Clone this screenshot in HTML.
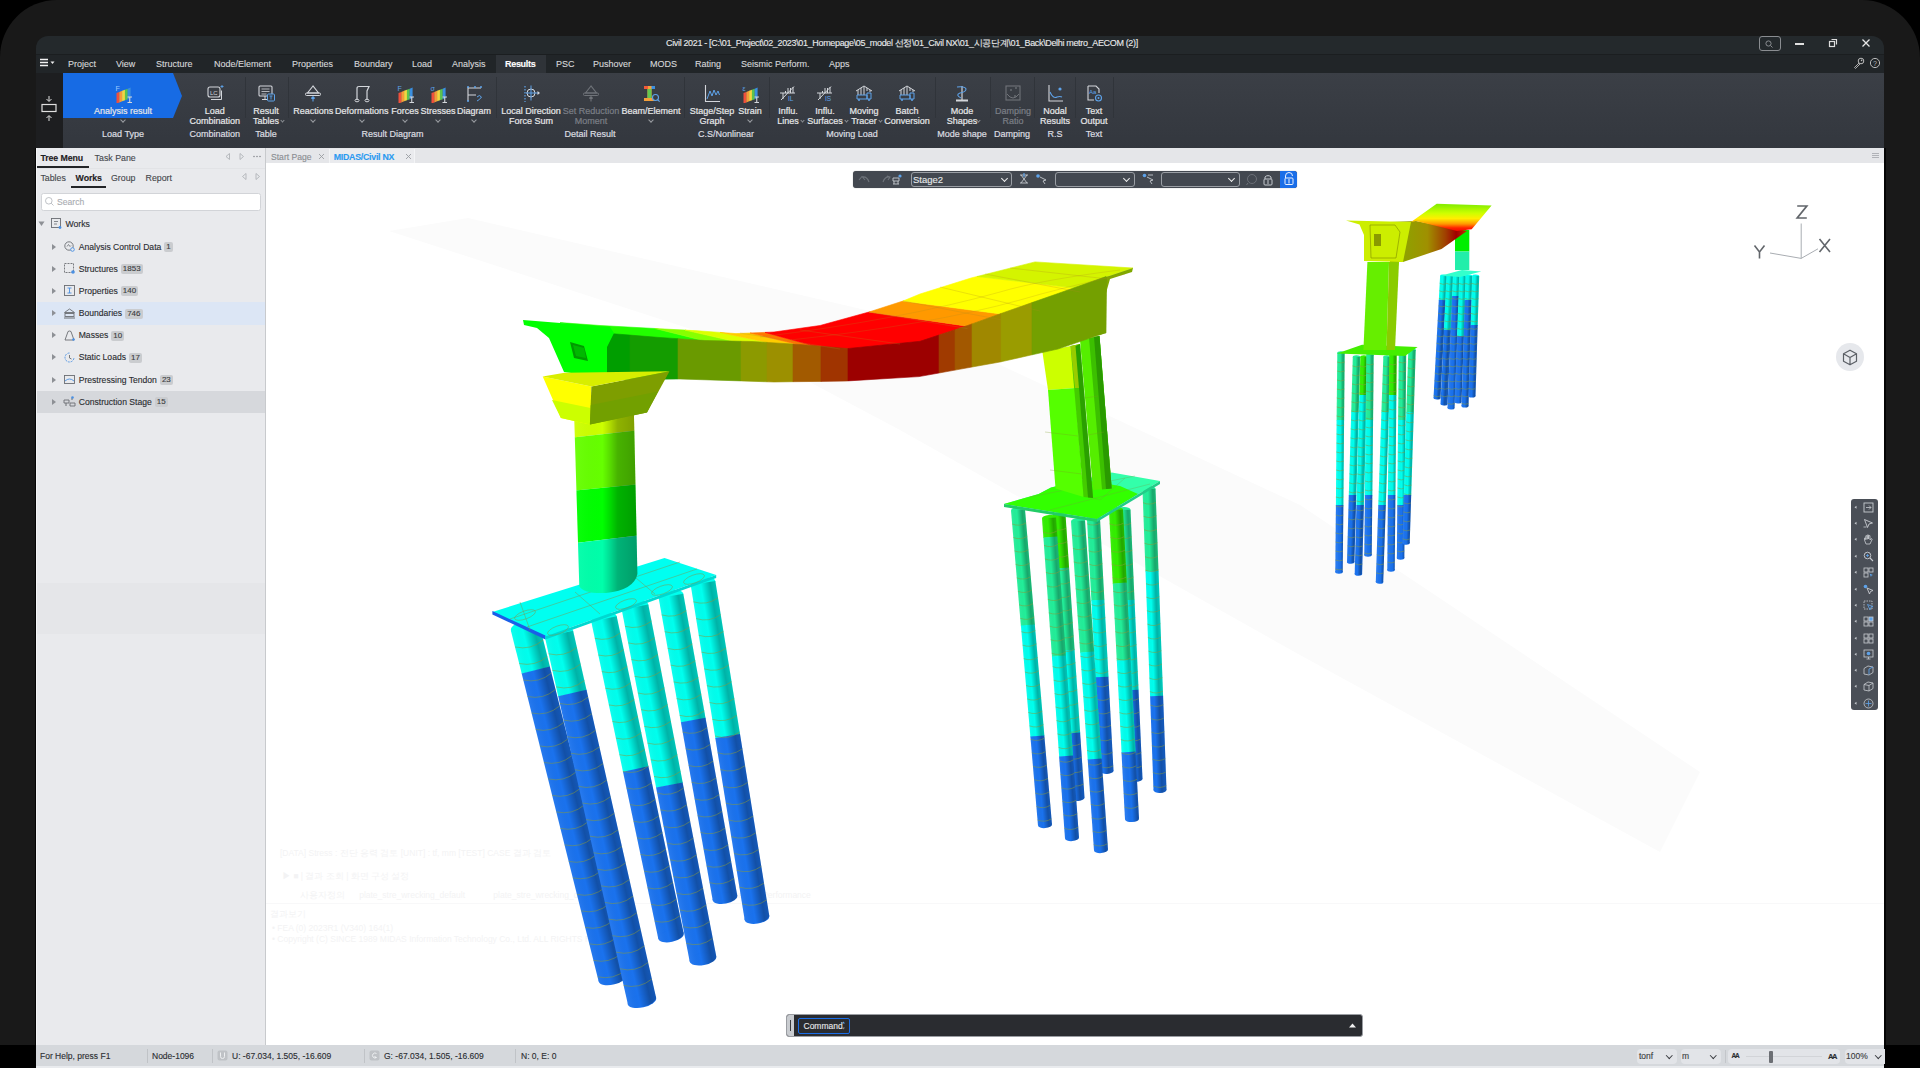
<!DOCTYPE html><html><head><meta charset="utf-8"><style>
*{margin:0;padding:0;box-sizing:border-box}
html,body{width:1920px;height:1068px;overflow:hidden;background:#000;font-family:"Liberation Sans",sans-serif}
.a{position:absolute}
.t{position:absolute;white-space:nowrap;-webkit-text-stroke:0.12px currentColor}
.rl{position:absolute;color:#e6e7e8;font-size:9px;line-height:10.4px;text-align:center;white-space:nowrap;transform:translateX(-50%);-webkit-text-stroke:0.2px currentColor}
.dis{color:#7b7f86}
.sep{position:absolute;width:1px;background:#30343a}
.chev{position:absolute;width:4px;height:4px;border-right:1px solid #9a9da2;border-bottom:1px solid #9a9da2;transform:rotate(45deg)}
.badge{display:inline-block;vertical-align:top;background:#cacccf;color:#3a3c40;border-radius:2px;padding:0 2px;margin-left:3px;line-height:10px;height:10px;font-size:8px;margin-top:0.5px}
.tri{position:absolute;width:0;height:0;border-top:3px solid transparent;border-bottom:3px solid transparent;border-left:4px solid #8d9095}
</style></head><body>
<div class="a" style="left:0px;top:0px;width:1920px;height:1045px;background:#191919;border-radius:57px 58px 0 0"></div>
<div class="a" style="left:36px;top:36px;width:1848px;height:18px;background:#24292c;border-radius:12px 12px 0 0"></div>
<div class="t" style="left:666px;top:38px;font-size:9px;line-height:10px;color:#e9eaeb;letter-spacing:-0.34px">Civil 2021 - [C:\01_Project\02_2023\01_Homepage\05_model 선정\01_Civil NX\01_시공단계\01_Back\Delhi metro_AECOM (2)]</div>
<div class="a" style="left:1759px;top:36px;width:22px;height:15px;border:1px solid #8a8d91;border-radius:3px"></div>
<svg class="a" style="left:1763px;top:39px" width="12" height="10"><circle cx="5.5" cy="4.5" r="2.6" fill="none" stroke="#8a8d91" stroke-width="1"/><line x1="7.5" y1="6.5" x2="9.5" y2="8.5" stroke="#8a8d91"/></svg>
<div class="a" style="left:1795px;top:43px;width:9px;height:1.6px;background:#e0e0e0"></div>
<svg class="a" style="left:1828px;top:38px" width="10" height="10"><rect x="1.5" y="3.5" width="5" height="5" fill="none" stroke="#ddd" stroke-width="1.2"/><path d="M3.5 1.5h5v5" fill="none" stroke="#ddd" stroke-width="1.2"/></svg>
<svg class="a" style="left:1861px;top:38px" width="11" height="11"><path d="M1.5 1.5l7 7M8.5 1.5l-7 7" stroke="#e6e6e6" stroke-width="1.3"/></svg>
<div class="a" style="left:36px;top:54px;width:1848px;height:19px;background:#212528;border-top:1px solid #1b1e20"></div>
<div class="a" style="left:36px;top:73px;width:1848px;height:0px;"></div>
<svg class="a" style="left:39px;top:58px" width="20" height="10"><path d="M1 1.5h8M1 4.5h8M1 7.5h8" stroke="#f2f2f2" stroke-width="1.3"/><path d="M11.5 3.5h4l-2 2.5z" fill="#eee"/></svg>
<div class="a" style="left:496px;top:55px;width:50px;height:18px;background:#2f3338"></div>
<div class="t" style="left:68px;top:59px;font-size:9px;line-height:10px;color:#d6d7d9">Project</div>
<div class="t" style="left:116px;top:59px;font-size:9px;line-height:10px;color:#d6d7d9">View</div>
<div class="t" style="left:156px;top:59px;font-size:9px;line-height:10px;color:#d6d7d9">Structure</div>
<div class="t" style="left:214px;top:59px;font-size:9px;line-height:10px;color:#d6d7d9">Node/Element</div>
<div class="t" style="left:292px;top:59px;font-size:9px;line-height:10px;color:#d6d7d9">Properties</div>
<div class="t" style="left:354px;top:59px;font-size:9px;line-height:10px;color:#d6d7d9">Boundary</div>
<div class="t" style="left:412px;top:59px;font-size:9px;line-height:10px;color:#d6d7d9">Load</div>
<div class="t" style="left:452px;top:59px;font-size:9px;line-height:10px;color:#d6d7d9">Analysis</div>
<div class="t" style="left:505px;top:59px;font-size:9px;line-height:10px;color:#fff;font-weight:bold;letter-spacing:-0.3px">Results</div>
<div class="t" style="left:556px;top:59px;font-size:9px;line-height:10px;color:#d6d7d9">PSC</div>
<div class="t" style="left:593px;top:59px;font-size:9px;line-height:10px;color:#d6d7d9">Pushover</div>
<div class="t" style="left:650px;top:59px;font-size:9px;line-height:10px;color:#d6d7d9">MODS</div>
<div class="t" style="left:695px;top:59px;font-size:9px;line-height:10px;color:#d6d7d9">Rating</div>
<div class="t" style="left:741px;top:59px;font-size:9px;line-height:10px;color:#d6d7d9">Seismic Perform.</div>
<div class="t" style="left:829px;top:59px;font-size:9px;line-height:10px;color:#d6d7d9">Apps</div>
<svg class="a" style="left:1853px;top:57px" width="12" height="12"><circle cx="8" cy="4" r="2.8" fill="none" stroke="#bbb" stroke-width="1"/><circle cx="8.6" cy="3.4" r="0.8" fill="#bbb"/><path d="M6 6L1.5 10.5l1 1 4.5-4.5" fill="none" stroke="#bbb" stroke-width="0.9"/></svg>
<svg class="a" style="left:1869px;top:57px" width="12" height="12"><circle cx="6" cy="6" r="4.6" fill="none" stroke="#bbb" stroke-width="1"/><text x="6" y="8.6" font-size="7" text-anchor="middle" fill="#bbb" font-family="Liberation Sans">?</text></svg>
<div class="a" style="left:36px;top:73px;width:1848px;height:75px;background:linear-gradient(#3b3f46,#373b42 50%,#33373e)"></div>
<div class="a" style="left:36px;top:73px;width:27px;height:75px;background:#1d1e20"></div>
<svg class="a" style="left:40px;top:95px" width="18" height="30"><path d="M9 1v5M6.5 4l2.5 2.5L11.5 4" fill="none" stroke="#e0e0e0" stroke-width="1"/><rect x="2" y="9.5" width="14" height="7" fill="none" stroke="#e0e0e0" stroke-width="1.2"/><path d="M9 26v-5M6.5 23l2.5-2.5L11.5 23" fill="none" stroke="#e0e0e0" stroke-width="1"/></svg>
<svg class="a" style="left:63px;top:73px" width="120" height="46"><path d="M0 0H110L119 23L110 45H0z" fill="#176be4"/></svg>
<svg class="a" style="left:114px;top:84px" width="19" height="19"><path d="M2.5 9.05L5.4 7.95L5.4 18.45L2.5 19.55z" fill="#f0503c"/><path d="M5.3 7.95L8.2 6.8500000000000005L8.2 17.349999999999998L5.3 18.45z" fill="#f59a3a"/><path d="M8.1 6.85L11.0 5.75L11.0 16.25L8.1 17.35z" fill="#f2d640"/><path d="M10.899999999999999 5.749999999999999L13.799999999999999 4.6499999999999995L13.799999999999999 15.149999999999999L10.899999999999999 16.25z" fill="#5cc24e"/><path d="M13.7 4.6499999999999995L16.599999999999998 3.55L16.599999999999998 14.049999999999999L13.7 15.15z" fill="#3a8fe0"/><text x="1.5" y="6.5" font-size="7" fill="#9ccaff" font-family="Liberation Sans">F</text><path d="M13.5 13h4.5M15.75 13v5.5M13.5 18.5h4.5" stroke="#d3d6db" stroke-width="1.1" fill="none"/></svg>
<div class="rl" style="left:123px;top:106.0px">Analysis result</div>
<div class="chev" style="left:121px;top:117.5px"></div>
<svg class="a" style="left:205.7px;top:84px" width="19" height="19"><rect x="2" y="3" width="12" height="10" rx="2" fill="none" stroke="#d3d6db" stroke-width="1.1"/><path d="M5 15.5h10.5v-9" fill="none" stroke="#d3d6db" stroke-width="1"/><text x="4" y="10.5" font-size="6" fill="#d3d6db" font-family="Liberation Sans">LC</text><path d="M16 1v3M14.5 2.5h3" stroke="#5ea3ea" stroke-width="0.9"/></svg>
<div class="rl" style="left:214.7px;top:106.0px">Load</div>
<div class="rl" style="left:214.7px;top:116.4px">Combination</div>
<svg class="a" style="left:257px;top:84px" width="19" height="19"><rect x="2" y="2" width="13" height="10" rx="1" fill="none" stroke="#d3d6db" stroke-width="1.1"/><path d="M4.5 5h8M4.5 7.5h8M4.5 10h5" stroke="#d3d6db" stroke-width="0.8"/><path d="M8 12v3M5 15.5h5" stroke="#d3d6db" stroke-width="1"/><rect x="10.5" y="10" width="7" height="7" rx="1" fill="#383c43" stroke="#5ea3ea" stroke-width="1"/><path d="M12.5 12h3M14 12v3.5" stroke="#5ea3ea" stroke-width="0.9"/></svg>
<div class="rl" style="left:266px;top:106.0px">Result</div>
<div class="rl" style="left:266px;top:116.4px">Tables</div>
<div class="chev" style="left:281.4px;top:119px;width:3px;height:3px;border-color:#8d9095"></div>
<svg class="a" style="left:304.3px;top:84px" width="19" height="19"><path d="M9 2L3.5 9h11z" fill="none" stroke="#d3d6db" stroke-width="1.1"/><rect x="1.5" y="9" width="15" height="2.5" rx="1" fill="none" stroke="#d3d6db" stroke-width="1"/><path d="M9 17.5v-4.5M7.3 14.5L9 12.8l1.7 1.7" fill="none" stroke="#5ea3ea" stroke-width="1.1"/></svg>
<div class="rl" style="left:313.3px;top:106.0px">Reactions</div>
<div class="chev" style="left:311.3px;top:117.5px"></div>
<svg class="a" style="left:352.7px;top:84px" width="19" height="19"><path d="M4 16V4.5Q4 2.5 6 2.5h10L14 7v9" fill="none" stroke="#d3d6db" stroke-width="1.2"/><ellipse cx="4" cy="16.5" rx="2" ry="1.3" fill="none" stroke="#d3d6db"/><ellipse cx="14" cy="16.5" rx="2" ry="1.3" fill="none" stroke="#d3d6db"/></svg>
<div class="rl" style="left:361.7px;top:106.0px">Deformations</div>
<div class="chev" style="left:359.7px;top:117.5px"></div>
<svg class="a" style="left:396px;top:84px" width="19" height="19"><path d="M2.5 9.05L5.4 7.95L5.4 18.45L2.5 19.55z" fill="#f0503c"/><path d="M5.3 7.95L8.2 6.8500000000000005L8.2 17.349999999999998L5.3 18.45z" fill="#f59a3a"/><path d="M8.1 6.85L11.0 5.75L11.0 16.25L8.1 17.35z" fill="#f2d640"/><path d="M10.899999999999999 5.749999999999999L13.799999999999999 4.6499999999999995L13.799999999999999 15.149999999999999L10.899999999999999 16.25z" fill="#5cc24e"/><path d="M13.7 4.6499999999999995L16.599999999999998 3.55L16.599999999999998 14.049999999999999L13.7 15.15z" fill="#3a8fe0"/><text x="1.5" y="6.5" font-size="7" fill="#5ea3ea" font-family="Liberation Sans">F</text><path d="M13.5 13h4.5M15.75 13v5.5M13.5 18.5h4.5" stroke="#d3d6db" stroke-width="1.1" fill="none"/></svg>
<div class="rl" style="left:405px;top:106.0px">Forces</div>
<div class="chev" style="left:403px;top:117.5px"></div>
<svg class="a" style="left:429px;top:84px" width="19" height="19"><path d="M2.5 9.05L5.4 7.95L5.4 18.45L2.5 19.55z" fill="#f0503c"/><path d="M5.3 7.95L8.2 6.8500000000000005L8.2 17.349999999999998L5.3 18.45z" fill="#f59a3a"/><path d="M8.1 6.85L11.0 5.75L11.0 16.25L8.1 17.35z" fill="#f2d640"/><path d="M10.899999999999999 5.749999999999999L13.799999999999999 4.6499999999999995L13.799999999999999 15.149999999999999L10.899999999999999 16.25z" fill="#5cc24e"/><path d="M13.7 4.6499999999999995L16.599999999999998 3.55L16.599999999999998 14.049999999999999L13.7 15.15z" fill="#3a8fe0"/><text x="1.5" y="6.5" font-size="7" fill="#5ea3ea" font-family="Liberation Sans">σ</text><path d="M13.5 13h4.5M15.75 13v5.5M13.5 18.5h4.5" stroke="#d3d6db" stroke-width="1.1" fill="none"/></svg>
<div class="rl" style="left:438px;top:106.0px">Stresses</div>
<div class="chev" style="left:436px;top:117.5px"></div>
<svg class="a" style="left:465px;top:84px" width="19" height="19"><path d="M3 3v14M3 4h13M3 11h8" fill="none" stroke="#d3d6db" stroke-width="1.1"/><circle cx="3" cy="3" r="1" fill="#5ea3ea"/><circle cx="10" cy="3" r="1" fill="#5ea3ea"/><circle cx="16" cy="3" r="1" fill="#5ea3ea"/><circle cx="3" cy="17" r="1" fill="#5ea3ea"/><path d="M12 13q2.5 -3 4.5 0q-2 3 -4.5 4" fill="none" stroke="#5ea3ea" stroke-width="1"/></svg>
<div class="rl" style="left:474px;top:106.0px">Diagram</div>
<div class="chev" style="left:472px;top:117.5px"></div>
<svg class="a" style="left:522px;top:84px" width="19" height="19"><path d="M3 2v16" stroke="#5ea3ea" stroke-width="1.2" stroke-dasharray="1.5 1.5"/><circle cx="9" cy="9" r="4" fill="none" stroke="#d3d6db" stroke-width="1"/><path d="M9 1.5v15M4 9h12" stroke="#5ea3ea" stroke-width="1"/><path d="M15.5 7l2.5 2-2.5 2z" fill="#d3d6db"/></svg>
<div class="rl" style="left:531px;top:106.0px">Local Direction</div>
<div class="rl" style="left:531px;top:116.4px">Force Sum</div>
<svg class="a" style="left:582px;top:84px" width="19" height="19"><path d="M9 2L3.5 9h11z" fill="none" stroke="#6f7379" stroke-width="1.1"/><rect x="1.5" y="9" width="15" height="2.5" rx="1" fill="none" stroke="#6f7379" stroke-width="1"/><path d="M9 17.5v-4.5M7.3 14.5L9 12.8l1.7 1.7" fill="none" stroke="#6f7379" stroke-width="1.1"/></svg>
<div class="rl dis" style="left:591px;top:106.0px">Set Reduction</div>
<div class="rl dis" style="left:591px;top:116.4px">Moment</div>
<svg class="a" style="left:642px;top:84px" width="19" height="19"><path d="M2 2h11v3h-3.5v9h3.5v3H2v-3h3.5V5H2z" fill="#f5a03a"/><path d="M5.5 5h4v9h-4z" fill="#64c850"/><path d="M2 2h4v3H2z" fill="#f05a3a"/><path d="M9.5 2h3.5v3h-3.5z" fill="#3a90e0"/><circle cx="13.5" cy="13.5" r="3" fill="#383c43" stroke="#5ea3ea" stroke-width="1.1"/><path d="M15.6 15.6l2 2" stroke="#5ea3ea" stroke-width="1.2"/></svg>
<div class="rl" style="left:651px;top:106.0px">Beam/Element</div>
<div class="chev" style="left:649px;top:117.5px"></div>
<svg class="a" style="left:703px;top:84px" width="19" height="19"><path d="M2.5 1v16.5H17" fill="none" stroke="#d3d6db" stroke-width="1.1"/><path d="M4 15l3-8 2 5 2-6 2 5 2-4 1.5 4" fill="none" stroke="#5ea3ea" stroke-width="1"/></svg>
<div class="rl" style="left:712px;top:106.0px">Stage/Step</div>
<div class="rl" style="left:712px;top:116.4px">Graph</div>
<svg class="a" style="left:741px;top:84px" width="19" height="19"><path d="M2.5 9.05L5.4 7.95L5.4 18.45L2.5 19.55z" fill="#f0503c"/><path d="M5.3 7.95L8.2 6.8500000000000005L8.2 17.349999999999998L5.3 18.45z" fill="#f59a3a"/><path d="M8.1 6.85L11.0 5.75L11.0 16.25L8.1 17.35z" fill="#f2d640"/><path d="M10.899999999999999 5.749999999999999L13.799999999999999 4.6499999999999995L13.799999999999999 15.149999999999999L10.899999999999999 16.25z" fill="#5cc24e"/><path d="M13.7 4.6499999999999995L16.599999999999998 3.55L16.599999999999998 14.049999999999999L13.7 15.15z" fill="#3a8fe0"/><text x="1.5" y="6.5" font-size="7" fill="#5ea3ea" font-family="Liberation Sans">ε</text><path d="M13.5 13h4.5M15.75 13v5.5M13.5 18.5h4.5" stroke="#d3d6db" stroke-width="1.1" fill="none"/></svg>
<div class="rl" style="left:750px;top:106.0px">Strain</div>
<div class="chev" style="left:748px;top:117.5px"></div>
<svg class="a" style="left:779px;top:84px" width="19" height="19"><path d="M1 9h15M2 16L15 2.5M4 9v6M6.5 9v-2M9 9v-5M11.5 9v-5M14 9v-6" fill="none" stroke="#d3d6db" stroke-width="1"/><text x="9" y="17" font-size="6.5" fill="#5ea3ea" font-family="Liberation Sans">IL</text></svg>
<div class="rl" style="left:788px;top:106.0px">Influ.</div>
<div class="rl" style="left:788px;top:116.4px">Lines</div>
<div class="chev" style="left:801.0px;top:119px;width:3px;height:3px;border-color:#8d9095"></div>
<svg class="a" style="left:816px;top:84px" width="19" height="19"><path d="M1 9h15M2 16L15 2.5M4 9v6M6.5 9v-2M9 9v-5M11.5 9v-5M14 9v-6" fill="none" stroke="#d3d6db" stroke-width="1"/><text x="9" y="17" font-size="6.5" fill="#5ea3ea" font-family="Liberation Sans">IS</text></svg>
<div class="rl" style="left:825px;top:106.0px">Influ.</div>
<div class="rl" style="left:825px;top:116.4px">Surfaces</div>
<div class="chev" style="left:845.2px;top:119px;width:3px;height:3px;border-color:#8d9095"></div>
<svg class="a" style="left:855px;top:84px" width="19" height="19"><path d="M1 7L9 2l8 5M3 6v5M6 4v7M9 2.5v8.5M12 4v3M15 6v2" fill="none" stroke="#d3d6db" stroke-width="1"/><path d="M2 11h10v4H2z M12 9h4v6h-4z" fill="none" stroke="#5ea3ea" stroke-width="1"/><circle cx="4" cy="16" r="1" fill="#5ea3ea"/><circle cx="14" cy="16" r="1" fill="#5ea3ea"/></svg>
<div class="rl" style="left:864px;top:106.0px">Moving</div>
<div class="rl" style="left:864px;top:116.4px">Tracer</div>
<div class="chev" style="left:879.4px;top:119px;width:3px;height:3px;border-color:#8d9095"></div>
<svg class="a" style="left:898px;top:84px" width="19" height="19"><path d="M1 7L9 2l8 5M3 6v5M6 4v7M9 2.5v8.5M12 4v3M15 6v2" fill="none" stroke="#d3d6db" stroke-width="1"/><path d="M2 11h10v4H2z M12 9h4v6h-4z" fill="none" stroke="#5ea3ea" stroke-width="1"/><circle cx="4" cy="16" r="1" fill="#5ea3ea"/><circle cx="14" cy="16" r="1" fill="#5ea3ea"/></svg>
<div class="rl" style="left:907px;top:106.0px">Batch</div>
<div class="rl" style="left:907px;top:116.4px">Conversion</div>
<svg class="a" style="left:953px;top:84px" width="19" height="19"><path d="M9 2v14" stroke="#d3d6db" stroke-width="1.2"/><path d="M3 16.5h12" stroke="#d3d6db" stroke-width="2"/><path d="M4 3q8 -1 9 2q0 3 -6 4q-5 2 1 5" fill="none" stroke="#5ea3ea" stroke-width="1.1"/></svg>
<div class="rl" style="left:962px;top:106.0px">Mode</div>
<div class="rl" style="left:962px;top:116.4px">Shapes</div>
<div class="chev" style="left:977.4px;top:119px;width:3px;height:3px;border-color:#8d9095"></div>
<svg class="a" style="left:1004px;top:84px" width="19" height="19"><rect x="2" y="2" width="14" height="14" fill="none" stroke="#707379" stroke-width="1.1"/><path d="M3 10q6 8 12 0" fill="none" stroke="#707379"/><path d="M6 6h2M7 5v2M11 4h2M12 3v2M10 12h2M11 11v2" stroke="#707379" stroke-width="0.8"/></svg>
<div class="rl dis" style="left:1013px;top:106.0px">Damping</div>
<div class="rl dis" style="left:1013px;top:116.4px">Ratio</div>
<svg class="a" style="left:1046px;top:84px" width="19" height="19"><path d="M3 1v16h14" fill="none" stroke="#d3d6db" stroke-width="1.1"/><path d="M4 8q3 7 7 5q3 -1 5 0" fill="none" stroke="#5ea3ea" stroke-width="1.1"/><circle cx="14" cy="5" r="1.6" fill="#5ea3ea"/></svg>
<div class="rl" style="left:1055px;top:106.0px">Nodal</div>
<div class="rl" style="left:1055px;top:116.4px">Results</div>
<svg class="a" style="left:1085px;top:84px" width="19" height="19"><path d="M3 2h8l3 3v4M3 2v14h6" fill="none" stroke="#d3d6db" stroke-width="1.1"/><text x="4" y="10" font-size="6" fill="#5ea3ea" font-family="Liberation Sans">Aa</text><circle cx="13.5" cy="14" r="3" fill="none" stroke="#5ea3ea" stroke-width="1.1"/><circle cx="13.5" cy="14" r="1" fill="#5ea3ea"/></svg>
<div class="rl" style="left:1094px;top:106.0px">Text</div>
<div class="rl" style="left:1094px;top:116.4px">Output</div>
<div class="rl" style="left:123px;top:129px;color:#dcdde0">Load Type</div>
<div class="rl" style="left:214.7px;top:129px;color:#dcdde0">Combination</div>
<div class="rl" style="left:266px;top:129px;color:#dcdde0">Table</div>
<div class="rl" style="left:392.5px;top:129px;color:#dcdde0">Result Diagram</div>
<div class="rl" style="left:590px;top:129px;color:#dcdde0">Detail Result</div>
<div class="rl" style="left:726px;top:129px;color:#dcdde0">C.S/Nonlinear</div>
<div class="rl" style="left:852px;top:129px;color:#dcdde0">Moving Load</div>
<div class="rl" style="left:962px;top:129px;color:#dcdde0">Mode shape</div>
<div class="rl" style="left:1012px;top:129px;color:#dcdde0">Damping</div>
<div class="rl" style="left:1055px;top:129px;color:#dcdde0">R.S</div>
<div class="rl" style="left:1094px;top:129px;color:#dcdde0">Text</div>
<div class="sep" style="left:245px;top:77px;height:41px"></div>
<div class="sep" style="left:288px;top:77px;height:41px"></div>
<div class="sep" style="left:496px;top:77px;height:41px"></div>
<div class="sep" style="left:684px;top:77px;height:41px"></div>
<div class="sep" style="left:769px;top:77px;height:41px"></div>
<div class="sep" style="left:935px;top:77px;height:41px"></div>
<div class="sep" style="left:990px;top:77px;height:41px"></div>
<div class="sep" style="left:1034px;top:77px;height:41px"></div>
<div class="sep" style="left:1075px;top:77px;height:41px"></div>
<div class="sep" style="left:1113px;top:77px;height:41px"></div>
<div class="a" style="left:36px;top:148px;width:230px;height:897px;background:#e9eaed;border-right:1px solid #c8cacd"></div>
<div class="t" style="left:40.4px;top:152.5px;font-size:8.8px;line-height:10px;font-weight:bold;color:#1f2124;letter-spacing:-0.1px">Tree Menu</div>
<div class="t" style="left:94.6px;top:152.5px;font-size:8.8px;line-height:10px;color:#45484c">Task Pane</div>
<div class="a" style="left:36px;top:165.5px;width:53px;height:2px;background:#222427"></div>
<svg class="a" style="left:223px;top:152px" width="40" height="10"><path d="M6.5 1.5v6l-3.5-3z" fill="none" stroke="#b0b3b8" stroke-width="0.9"/><path d="M17 1.5v6l3.5-3z" fill="none" stroke="#b0b3b8" stroke-width="0.9"/><circle cx="31" cy="4.5" r="0.8" fill="#8a8d92"/><circle cx="34" cy="4.5" r="0.8" fill="#8a8d92"/><circle cx="37" cy="4.5" r="0.8" fill="#8a8d92"/></svg>
<div class="a" style="left:36px;top:168px;width:229px;height:1px;background:#e2e3e6"></div>
<div class="t" style="left:40.4px;top:173px;font-size:8.8px;line-height:10px;color:#45484c">Tables</div>
<div class="t" style="left:75.6px;top:173px;font-size:8.8px;line-height:10px;font-weight:bold;color:#1f2124;letter-spacing:-0.1px">Works</div>
<div class="t" style="left:111px;top:173px;font-size:8.8px;line-height:10px;color:#45484c">Group</div>
<div class="t" style="left:145.6px;top:173px;font-size:8.8px;line-height:10px;color:#45484c">Report</div>
<div class="a" style="left:71px;top:185.5px;width:35px;height:2px;background:#222427"></div>
<svg class="a" style="left:240px;top:172px" width="22" height="10"><path d="M6 1.5v6l-3.5-3z" fill="none" stroke="#b0b3b8" stroke-width="0.9"/><path d="M16 1.5v6l3.5-3z" fill="none" stroke="#b0b3b8" stroke-width="0.9"/></svg>
<div class="a" style="left:40.5px;top:192.5px;width:220.5px;height:18px;background:#fff;border:1px solid #d2d4d8;border-radius:2.5px"></div>
<svg class="a" style="left:44px;top:196px" width="11" height="11"><circle cx="4.8" cy="4.8" r="3.3" fill="none" stroke="#b8bbc0" stroke-width="0.9"/><path d="M7.2 7.2l2.3 2.3" stroke="#b8bbc0" stroke-width="0.9"/></svg>
<div class="t" style="left:57px;top:196.5px;font-size:8.6px;line-height:10px;color:#a9acb1">Search</div>
<div class="a" style="left:36px;top:302px;width:229px;height:22.5px;background:#dce6f5"></div>
<div class="a" style="left:36px;top:391px;width:229px;height:21.7px;background:#d6d8dc"></div>
<div class="a" style="left:36px;top:583px;width:229px;height:51px;background:#e5e6e9"></div>
<svg class="a" style="left:38px;top:220px" width="8" height="8"><path d="M0.5 1.5h6l-3 4.5z" fill="#8d9095"/></svg>
<svg class="a" style="left:50px;top:217px" width="13" height="13"><rect x="1.5" y="1.5" width="9" height="9" fill="none" stroke="#6b6e73" stroke-width="0.9"/><path d="M4 4.5h4M4 7h3" stroke="#6b6e73" stroke-width="0.8"/><circle cx="10" cy="10.5" r="1.4" fill="#4a90e2"/></svg>
<div class="t" style="left:65.5px;top:219px;font-size:8.7px;line-height:10px;color:#2a2c30">Works</div>
<div class="tri" style="left:52px;top:243.5px;border-left-color:#8d9095"></div>
<svg class="a" style="left:63px;top:240.0px" width="13" height="13"><circle cx="6" cy="6" r="4.2" fill="none" stroke="#6b6e73" stroke-width="0.9"/><path d="M4 6.5l1.5-2 1.5 2 1-1" fill="none" stroke="#6b6e73" stroke-width="0.8"/><circle cx="9.5" cy="9.5" r="1.8" fill="#e9eaed" stroke="#4a90e2" stroke-width="0.9"/></svg>
<div class="t" style="left:78.7px;top:241.5px;font-size:8.6px;line-height:10px;color:#2a2c30">Analysis Control Data<span class="badge">1</span></div>
<div class="tri" style="left:52px;top:265.5px;border-left-color:#8d9095"></div>
<svg class="a" style="left:63px;top:262.0px" width="13" height="13"><rect x="1.5" y="1.5" width="9" height="9" fill="none" stroke="#6b6e73" stroke-width="0.9" stroke-dasharray="2 1"/><circle cx="10" cy="10" r="1.8" fill="#4a90e2"/></svg>
<div class="t" style="left:78.7px;top:263.5px;font-size:8.6px;line-height:10px;color:#2a2c30">Structures<span class="badge">1853</span></div>
<div class="tri" style="left:52px;top:287.5px;border-left-color:#8d9095"></div>
<svg class="a" style="left:63px;top:284.0px" width="13" height="13"><rect x="1.5" y="1.5" width="10" height="10" fill="none" stroke="#6b6e73" stroke-width="0.9"/><path d="M4.5 4h4M6.5 4v5M4.5 9h4" stroke="#4a90e2" stroke-width="0.9"/></svg>
<div class="t" style="left:78.7px;top:285.5px;font-size:8.6px;line-height:10px;color:#2a2c30">Properties<span class="badge">140</span></div>
<div class="tri" style="left:52px;top:310px;border-left-color:#8d9095"></div>
<svg class="a" style="left:63px;top:306.5px" width="13" height="13"><path d="M1.5 5.5L6.5 2l5 3.5z" fill="none" stroke="#6b6e73" stroke-width="0.9"/><rect x="2" y="6.5" width="9" height="3" fill="none" stroke="#6b6e73" stroke-width="0.9"/><path d="M1 11h11" stroke="#6b6e73"/></svg>
<div class="t" style="left:78.7px;top:308px;font-size:8.6px;line-height:10px;color:#2a2c30">Boundaries<span class="badge">746</span></div>
<div class="tri" style="left:52px;top:332px;border-left-color:#8d9095"></div>
<svg class="a" style="left:63px;top:328.5px" width="13" height="13"><path d="M2 11L4.5 4a2 2 0 0 1 4 0L11 11z" fill="none" stroke="#6b6e73" stroke-width="0.9"/><circle cx="10.5" cy="10.5" r="1.3" fill="#4a90e2"/></svg>
<div class="t" style="left:78.7px;top:330px;font-size:8.6px;line-height:10px;color:#2a2c30">Masses<span class="badge">10</span></div>
<div class="tri" style="left:52px;top:354px;border-left-color:#8d9095"></div>
<svg class="a" style="left:63px;top:350.5px" width="13" height="13"><path d="M6.5 2a4.5 4.5 0 1 0 4.5 4.5" fill="none" stroke="#4a90e2" stroke-width="0.9" stroke-dasharray="2 1"/><path d="M6.5 4v3l2 1" fill="none" stroke="#6b6e73" stroke-width="0.9"/></svg>
<div class="t" style="left:78.7px;top:352px;font-size:8.6px;line-height:10px;color:#2a2c30">Static Loads<span class="badge">17</span></div>
<div class="tri" style="left:52px;top:376.5px;border-left-color:#8d9095"></div>
<svg class="a" style="left:63px;top:373.0px" width="13" height="13"><rect x="1.5" y="2.5" width="10" height="8" fill="none" stroke="#6b6e73" stroke-width="0.9"/><path d="M2 8q4.5 -4 9 0" fill="none" stroke="#4a90e2" stroke-width="0.9"/></svg>
<div class="t" style="left:78.7px;top:374.5px;font-size:8.6px;line-height:10px;color:#2a2c30">Prestressing Tendon<span class="badge">23</span></div>
<div class="tri" style="left:52px;top:398.5px;border-left-color:#8d9095"></div>
<svg class="a" style="left:63px;top:395.0px" width="13" height="13"><path d="M1 5h5v3H1zM7 8h5v3H7z" fill="none" stroke="#6b6e73" stroke-width="0.9"/><path d="M3 8v3M9 5V3" stroke="#6b6e73"/><circle cx="9.5" cy="2.5" r="1.3" fill="#4a90e2"/></svg>
<div class="t" style="left:78.7px;top:396.5px;font-size:8.6px;line-height:10px;color:#2a2c30">Construction Stage<span class="badge">15</span></div>
<div class="a" style="left:34.5px;top:148px;width:1.5px;height:897px;background:#050505"></div>
<div class="a" style="left:36px;top:148px;width:1px;height:897px;background:#f4f5f7"></div>
<div class="a" style="left:1884px;top:148px;width:1.6px;height:897px;background:#050505"></div>
<div class="a" style="left:266px;top:148px;width:1618px;height:15px;background:#e5e6e9"></div>
<div class="a" style="left:330px;top:149px;width:84px;height:14px;background:#eaebee"></div>
<div class="a" style="left:329px;top:149px;width:1px;height:14px;background:#f3f4f6"></div>
<div class="a" style="left:414px;top:149px;width:1px;height:14px;background:#f3f4f6"></div>
<div class="t" style="left:271px;top:152px;font-size:8.6px;line-height:10px;color:#8a8d92">Start Page</div>
<svg class="a" style="left:318px;top:153px" width="8" height="8"><path d="M1 1l5 5M6 1L1 6" stroke="#9a9da2" stroke-width="0.9"/></svg>
<div class="t" style="left:333.7px;top:152px;font-size:8.8px;line-height:10px;color:#2a9af0;font-weight:bold;letter-spacing:-0.25px">MIDAS/Civil NX</div>
<svg class="a" style="left:405px;top:153px" width="8" height="8"><path d="M1 1l5 5M6 1L1 6" stroke="#9a9da2" stroke-width="0.9"/></svg>
<svg class="a" style="left:1871px;top:152px" width="9" height="8"><path d="M1 1.5h7M1 3.5h7M1 5.5h7" stroke="#a2a5aa" stroke-width="0.8"/></svg>
<div class="a" style="left:266px;top:163px;width:1618px;height:882px;background:#fff"></div>
<svg class="a" style="left:0;top:0" width="1920" height="1068"><polygon points="389,231 468,218 900,318 1300,505 1700,772 1660,852 1300,655 900,430 740,345" fill="#fbfbfb"/></svg>
<div class="t" style="left:280px;top:848px;font-size:8.5px;line-height:10px;color:#f3f3f4;-webkit-text-stroke:0">[DATA] Stress : 전단 응력 검토 [UNIT] : tf, mm [TEST] CASE 결과 검토</div>
<div class="t" style="left:282px;top:871px;font-size:8.5px;line-height:10px;color:#f3f3f4;-webkit-text-stroke:0">&#9654; &#9632; | 결과 조회 | 화면 구성 설정</div>
<div class="t" style="left:300px;top:890px;font-size:8.5px;line-height:10px;color:#f3f3f4;-webkit-text-stroke:0">사용자정의 &nbsp;&nbsp;&nbsp;&nbsp; plate_stre_wrecking_default &nbsp;&nbsp;&nbsp;&nbsp;&nbsp;&nbsp;&nbsp;&nbsp;&nbsp;&nbsp; plate_stre_wrecking_default &nbsp;&nbsp;&nbsp;&nbsp;&nbsp;&nbsp;&nbsp;&nbsp;&nbsp;&nbsp;&nbsp;&nbsp;&nbsp;&nbsp;&nbsp;&nbsp;&nbsp;&nbsp;&nbsp;&nbsp;&nbsp;&nbsp;&nbsp;&nbsp;&nbsp;&nbsp;&nbsp;&nbsp;&nbsp;&nbsp;&nbsp;&nbsp;&nbsp;&nbsp;&nbsp;&nbsp;&nbsp;&nbsp;&nbsp;&nbsp;&nbsp;&nbsp;&nbsp;&nbsp;&nbsp;&nbsp; sort analysis Performance</div>
<div class="a" style="left:266px;top:903px;width:1618px;height:1px;background:#f8f8f9"></div>
<div class="t" style="left:270px;top:909px;font-size:8.5px;line-height:10px;color:#f3f3f4;-webkit-text-stroke:0">결과보기</div>
<div class="t" style="left:272px;top:923px;font-size:8.5px;line-height:10px;color:#f3f3f4;-webkit-text-stroke:0">&#8226; FEA (0) 2023R1 (V340) 164(1)</div>
<div class="t" style="left:272px;top:934px;font-size:8.5px;line-height:10px;color:#f3f3f4;-webkit-text-stroke:0">&#8226; Copyright (C) SINCE 1989 MIDAS Information Technology Co., Ltd. ALL RIGHTS RESERVED.</div>
<svg class="a" style="left:0;top:0" width="1920" height="1068" viewBox="0 0 1920 1068"><defs><clipPath id="vc"><rect x="266" y="163" width="1618" height="882"/></clipPath></defs><g clip-path="url(#vc)"><ellipse cx="1443.6" cy="276.0" rx="3.5" ry="1.6" transform="rotate(3.1 1443.6 276.0)" fill="#00ffee"/><polygon points="1440.1,275.8 1447.1,276.2 1445.8,300.8 1438.8,300.4" fill="#00ffee" /><polygon points="1438.8,299.8 1445.8,300.2 1440.5,398.2 1433.5,397.8" fill="#1a72ee" /><ellipse cx="1437.0" cy="398.0" rx="3.5" ry="1.6" transform="rotate(3.1 1437.0 398.0)" fill="#1a72ee"/><linearGradient id="pg1" gradientUnits="userSpaceOnUse" x1="1440.1" y1="275.8" x2="1447.1" y2="276.2"><stop offset="0" stop-color="#fff" stop-opacity="0.06"/><stop offset="0.4" stop-color="#000" stop-opacity="0"/><stop offset="0.78" stop-color="#000" stop-opacity="0.3"/><stop offset="1" stop-color="#000" stop-opacity="0.225"/></linearGradient><path d="M1440.1 275.8L1447.1 276.2L1440.5 398.2A3.5 1.6 3.1 0 1 1433.5 397.8z" fill="url(#pg1)"/><path d="M1439.7 283.3Q1443.1 285.2 1446.7 283.7" fill="none" stroke="#8a9a3a" stroke-width="0.7" opacity="0.75"/><path d="M1439.3 290.8Q1442.7 292.7 1446.3 291.2" fill="none" stroke="#8a9a3a" stroke-width="0.7" opacity="0.75"/><path d="M1438.9 298.3Q1442.3 300.2 1445.9 298.7" fill="none" stroke="#8a9a3a" stroke-width="0.7" opacity="0.75"/><path d="M1438.5 305.8Q1441.9 307.7 1445.5 306.1" fill="none" stroke="#8a9a3a" stroke-width="0.7" opacity="0.75"/><path d="M1438.1 313.3Q1441.5 315.2 1445.1 313.6" fill="none" stroke="#8a9a3a" stroke-width="0.7" opacity="0.75"/><path d="M1437.7 320.7Q1441.1 322.7 1444.7 321.1" fill="none" stroke="#8a9a3a" stroke-width="0.7" opacity="0.75"/><path d="M1437.3 328.2Q1440.7 330.2 1444.3 328.6" fill="none" stroke="#8a9a3a" stroke-width="0.7" opacity="0.75"/><path d="M1436.9 335.7Q1440.3 337.7 1443.9 336.1" fill="none" stroke="#8a9a3a" stroke-width="0.7" opacity="0.75"/><path d="M1436.5 343.2Q1439.9 345.1 1443.4 343.6" fill="none" stroke="#8a9a3a" stroke-width="0.7" opacity="0.75"/><path d="M1436.1 350.7Q1439.5 352.6 1443.0 351.1" fill="none" stroke="#8a9a3a" stroke-width="0.7" opacity="0.75"/><path d="M1435.6 358.2Q1439.0 360.1 1442.6 358.6" fill="none" stroke="#8a9a3a" stroke-width="0.7" opacity="0.75"/><path d="M1435.2 365.7Q1438.6 367.6 1442.2 366.1" fill="none" stroke="#8a9a3a" stroke-width="0.7" opacity="0.75"/><path d="M1434.8 373.2Q1438.2 375.1 1441.8 373.5" fill="none" stroke="#8a9a3a" stroke-width="0.7" opacity="0.75"/><path d="M1434.4 380.7Q1437.8 382.6 1441.4 381.0" fill="none" stroke="#8a9a3a" stroke-width="0.7" opacity="0.75"/><path d="M1434.0 388.1Q1437.4 390.1 1441.0 388.5" fill="none" stroke="#8a9a3a" stroke-width="0.7" opacity="0.75"/><path d="M1433.6 395.6Q1437.0 397.6 1440.6 396.0" fill="none" stroke="#8a9a3a" stroke-width="0.7" opacity="0.75"/><ellipse cx="1450.0" cy="276.0" rx="3.5" ry="1.6" transform="rotate(2.7 1450.0 276.0)" fill="#00ffee"/><polygon points="1446.5,275.8 1453.5,276.2 1450.9,330.8 1443.9,330.4" fill="#00ffee" /><polygon points="1444.0,329.8 1451.0,330.2 1447.5,404.2 1440.5,403.8" fill="#1a72ee" /><ellipse cx="1444.0" cy="404.0" rx="3.5" ry="1.6" transform="rotate(2.7 1444.0 404.0)" fill="#1a72ee"/><linearGradient id="pg2" gradientUnits="userSpaceOnUse" x1="1446.5" y1="275.8" x2="1453.5" y2="276.2"><stop offset="0" stop-color="#fff" stop-opacity="0.06"/><stop offset="0.4" stop-color="#000" stop-opacity="0"/><stop offset="0.78" stop-color="#000" stop-opacity="0.3"/><stop offset="1" stop-color="#000" stop-opacity="0.225"/></linearGradient><path d="M1446.5 275.8L1453.5 276.2L1447.5 404.2A3.5 1.6 2.7 0 1 1440.5 403.8z" fill="url(#pg2)"/><path d="M1446.2 283.3Q1449.6 285.2 1453.1 283.7" fill="none" stroke="#8a9a3a" stroke-width="0.7" opacity="0.75"/><path d="M1445.8 290.8Q1449.2 292.7 1452.8 291.1" fill="none" stroke="#8a9a3a" stroke-width="0.7" opacity="0.75"/><path d="M1445.5 298.3Q1448.9 300.2 1452.4 298.6" fill="none" stroke="#8a9a3a" stroke-width="0.7" opacity="0.75"/><path d="M1445.1 305.8Q1448.5 307.7 1452.1 306.1" fill="none" stroke="#8a9a3a" stroke-width="0.7" opacity="0.75"/><path d="M1444.7 313.3Q1448.2 315.2 1451.7 313.6" fill="none" stroke="#8a9a3a" stroke-width="0.7" opacity="0.75"/><path d="M1444.4 320.8Q1447.8 322.7 1451.4 321.1" fill="none" stroke="#8a9a3a" stroke-width="0.7" opacity="0.75"/><path d="M1444.0 328.3Q1447.5 330.2 1451.0 328.6" fill="none" stroke="#8a9a3a" stroke-width="0.7" opacity="0.75"/><path d="M1443.7 335.8Q1447.1 337.7 1450.7 336.1" fill="none" stroke="#8a9a3a" stroke-width="0.7" opacity="0.75"/><path d="M1443.3 343.3Q1446.8 345.2 1450.3 343.6" fill="none" stroke="#8a9a3a" stroke-width="0.7" opacity="0.75"/><path d="M1443.0 350.8Q1446.4 352.7 1450.0 351.1" fill="none" stroke="#8a9a3a" stroke-width="0.7" opacity="0.75"/><path d="M1442.6 358.2Q1446.1 360.2 1449.6 358.6" fill="none" stroke="#8a9a3a" stroke-width="0.7" opacity="0.75"/><path d="M1442.3 365.7Q1445.7 367.6 1449.3 366.1" fill="none" stroke="#8a9a3a" stroke-width="0.7" opacity="0.75"/><path d="M1441.9 373.2Q1445.4 375.1 1448.9 373.6" fill="none" stroke="#8a9a3a" stroke-width="0.7" opacity="0.75"/><path d="M1441.6 380.7Q1445.0 382.6 1448.6 381.0" fill="none" stroke="#8a9a3a" stroke-width="0.7" opacity="0.75"/><path d="M1441.2 388.2Q1444.7 390.1 1448.2 388.5" fill="none" stroke="#8a9a3a" stroke-width="0.7" opacity="0.75"/><path d="M1440.9 395.7Q1444.3 397.6 1447.9 396.0" fill="none" stroke="#8a9a3a" stroke-width="0.7" opacity="0.75"/><ellipse cx="1456.4" cy="276.0" rx="3.5" ry="1.6" transform="rotate(2.3 1456.4 276.0)" fill="#00ffee"/><polygon points="1452.9,275.9 1459.9,276.1 1459.1,296.7 1452.1,296.5" fill="#00ffee" /><polygon points="1452.1,295.9 1459.1,296.1 1454.5,408.1 1447.5,407.9" fill="#1a72ee" /><ellipse cx="1451.0" cy="408.0" rx="3.5" ry="1.6" transform="rotate(2.3 1451.0 408.0)" fill="#1a72ee"/><linearGradient id="pg3" gradientUnits="userSpaceOnUse" x1="1452.9" y1="275.9" x2="1459.9" y2="276.1"><stop offset="0" stop-color="#fff" stop-opacity="0.06"/><stop offset="0.4" stop-color="#000" stop-opacity="0"/><stop offset="0.78" stop-color="#000" stop-opacity="0.3"/><stop offset="1" stop-color="#000" stop-opacity="0.225"/></linearGradient><path d="M1452.9 275.9L1459.9 276.1L1454.5 408.1A3.5 1.6 2.3 0 1 1447.5 407.9z" fill="url(#pg3)"/><path d="M1452.6 283.4Q1456.0 285.2 1459.6 283.6" fill="none" stroke="#8a9a3a" stroke-width="0.7" opacity="0.75"/><path d="M1452.3 290.8Q1455.7 292.7 1459.3 291.1" fill="none" stroke="#8a9a3a" stroke-width="0.7" opacity="0.75"/><path d="M1452.0 298.3Q1455.4 300.2 1459.0 298.6" fill="none" stroke="#8a9a3a" stroke-width="0.7" opacity="0.75"/><path d="M1451.7 305.8Q1455.1 307.7 1458.7 306.1" fill="none" stroke="#8a9a3a" stroke-width="0.7" opacity="0.75"/><path d="M1451.4 313.3Q1454.8 315.2 1458.4 313.6" fill="none" stroke="#8a9a3a" stroke-width="0.7" opacity="0.75"/><path d="M1451.1 320.8Q1454.5 322.7 1458.1 321.1" fill="none" stroke="#8a9a3a" stroke-width="0.7" opacity="0.75"/><path d="M1450.8 328.3Q1454.2 330.2 1457.8 328.6" fill="none" stroke="#8a9a3a" stroke-width="0.7" opacity="0.75"/><path d="M1450.5 335.8Q1453.9 337.7 1457.4 336.1" fill="none" stroke="#8a9a3a" stroke-width="0.7" opacity="0.75"/><path d="M1450.1 343.3Q1453.6 345.2 1457.1 343.6" fill="none" stroke="#8a9a3a" stroke-width="0.7" opacity="0.75"/><path d="M1449.8 350.8Q1453.3 352.7 1456.8 351.1" fill="none" stroke="#8a9a3a" stroke-width="0.7" opacity="0.75"/><path d="M1449.5 358.3Q1453.0 360.2 1456.5 358.6" fill="none" stroke="#8a9a3a" stroke-width="0.7" opacity="0.75"/><path d="M1449.2 365.8Q1452.6 367.7 1456.2 366.1" fill="none" stroke="#8a9a3a" stroke-width="0.7" opacity="0.75"/><path d="M1448.9 373.3Q1452.3 375.2 1455.9 373.6" fill="none" stroke="#8a9a3a" stroke-width="0.7" opacity="0.75"/><path d="M1448.6 380.8Q1452.0 382.7 1455.6 381.1" fill="none" stroke="#8a9a3a" stroke-width="0.7" opacity="0.75"/><path d="M1448.3 388.3Q1451.7 390.2 1455.3 388.5" fill="none" stroke="#8a9a3a" stroke-width="0.7" opacity="0.75"/><path d="M1448.0 395.8Q1451.4 397.6 1455.0 396.0" fill="none" stroke="#8a9a3a" stroke-width="0.7" opacity="0.75"/><path d="M1447.7 403.3Q1451.1 405.1 1454.7 403.5" fill="none" stroke="#8a9a3a" stroke-width="0.7" opacity="0.75"/><ellipse cx="1462.8" cy="276.0" rx="3.5" ry="1.6" transform="rotate(2.2 1462.8 276.0)" fill="#00ffee"/><polygon points="1459.3,275.9 1466.3,276.1 1464.0,336.7 1457.0,336.5" fill="#00ffee" /><polygon points="1457.0,335.9 1464.0,336.1 1461.5,402.1 1454.5,401.9" fill="#1a72ee" /><ellipse cx="1458.0" cy="402.0" rx="3.5" ry="1.6" transform="rotate(2.2 1458.0 402.0)" fill="#1a72ee"/><linearGradient id="pg4" gradientUnits="userSpaceOnUse" x1="1459.3" y1="275.9" x2="1466.3" y2="276.1"><stop offset="0" stop-color="#fff" stop-opacity="0.06"/><stop offset="0.4" stop-color="#000" stop-opacity="0"/><stop offset="0.78" stop-color="#000" stop-opacity="0.3"/><stop offset="1" stop-color="#000" stop-opacity="0.225"/></linearGradient><path d="M1459.3 275.9L1466.3 276.1L1461.5 402.1A3.5 1.6 2.2 0 1 1454.5 401.9z" fill="url(#pg4)"/><path d="M1459.0 283.4Q1462.4 285.2 1466.0 283.6" fill="none" stroke="#8a9a3a" stroke-width="0.7" opacity="0.75"/><path d="M1458.7 290.9Q1462.2 292.7 1465.7 291.1" fill="none" stroke="#8a9a3a" stroke-width="0.7" opacity="0.75"/><path d="M1458.4 298.4Q1461.9 300.2 1465.4 298.6" fill="none" stroke="#8a9a3a" stroke-width="0.7" opacity="0.75"/><path d="M1458.2 305.8Q1461.6 307.7 1465.2 306.1" fill="none" stroke="#8a9a3a" stroke-width="0.7" opacity="0.75"/><path d="M1457.9 313.3Q1461.3 315.2 1464.9 313.6" fill="none" stroke="#8a9a3a" stroke-width="0.7" opacity="0.75"/><path d="M1457.6 320.8Q1461.0 322.7 1464.6 321.1" fill="none" stroke="#8a9a3a" stroke-width="0.7" opacity="0.75"/><path d="M1457.3 328.3Q1460.7 330.2 1464.3 328.6" fill="none" stroke="#8a9a3a" stroke-width="0.7" opacity="0.75"/><path d="M1457.0 335.8Q1460.4 337.7 1464.0 336.1" fill="none" stroke="#8a9a3a" stroke-width="0.7" opacity="0.75"/><path d="M1456.7 343.3Q1460.2 345.2 1463.7 343.6" fill="none" stroke="#8a9a3a" stroke-width="0.7" opacity="0.75"/><path d="M1456.4 350.8Q1459.9 352.7 1463.4 351.1" fill="none" stroke="#8a9a3a" stroke-width="0.7" opacity="0.75"/><path d="M1456.2 358.3Q1459.6 360.2 1463.2 358.6" fill="none" stroke="#8a9a3a" stroke-width="0.7" opacity="0.75"/><path d="M1455.9 365.8Q1459.3 367.7 1462.9 366.1" fill="none" stroke="#8a9a3a" stroke-width="0.7" opacity="0.75"/><path d="M1455.6 373.3Q1459.0 375.2 1462.6 373.6" fill="none" stroke="#8a9a3a" stroke-width="0.7" opacity="0.75"/><path d="M1455.3 380.8Q1458.7 382.7 1462.3 381.1" fill="none" stroke="#8a9a3a" stroke-width="0.7" opacity="0.75"/><path d="M1455.0 388.3Q1458.5 390.2 1462.0 388.6" fill="none" stroke="#8a9a3a" stroke-width="0.7" opacity="0.75"/><path d="M1454.7 395.8Q1458.2 397.7 1461.7 396.0" fill="none" stroke="#8a9a3a" stroke-width="0.7" opacity="0.75"/><ellipse cx="1469.0" cy="276.0" rx="3.5" ry="1.6" transform="rotate(1.8 1469.0 276.0)" fill="#00ffee"/><polygon points="1465.5,275.9 1472.5,276.1 1471.7,300.7 1464.7,300.5" fill="#00ffee" /><polygon points="1464.8,299.9 1471.8,300.1 1468.5,406.1 1461.5,405.9" fill="#1a72ee" /><ellipse cx="1465.0" cy="406.0" rx="3.5" ry="1.6" transform="rotate(1.8 1465.0 406.0)" fill="#1a72ee"/><linearGradient id="pg5" gradientUnits="userSpaceOnUse" x1="1465.5" y1="275.9" x2="1472.5" y2="276.1"><stop offset="0" stop-color="#fff" stop-opacity="0.06"/><stop offset="0.4" stop-color="#000" stop-opacity="0"/><stop offset="0.78" stop-color="#000" stop-opacity="0.3"/><stop offset="1" stop-color="#000" stop-opacity="0.225"/></linearGradient><path d="M1465.5 275.9L1472.5 276.1L1468.5 406.1A3.5 1.6 1.8 0 1 1461.5 405.9z" fill="url(#pg5)"/><path d="M1465.3 283.4Q1468.7 285.2 1472.3 283.6" fill="none" stroke="#8a9a3a" stroke-width="0.7" opacity="0.75"/><path d="M1465.0 290.9Q1468.5 292.7 1472.0 291.1" fill="none" stroke="#8a9a3a" stroke-width="0.7" opacity="0.75"/><path d="M1464.8 298.4Q1468.3 300.2 1471.8 298.6" fill="none" stroke="#8a9a3a" stroke-width="0.7" opacity="0.75"/><path d="M1464.6 305.9Q1468.0 307.7 1471.6 306.1" fill="none" stroke="#8a9a3a" stroke-width="0.7" opacity="0.75"/><path d="M1464.3 313.4Q1467.8 315.2 1471.3 313.6" fill="none" stroke="#8a9a3a" stroke-width="0.7" opacity="0.75"/><path d="M1464.1 320.9Q1467.6 322.7 1471.1 321.1" fill="none" stroke="#8a9a3a" stroke-width="0.7" opacity="0.75"/><path d="M1463.9 328.4Q1467.3 330.2 1470.9 328.6" fill="none" stroke="#8a9a3a" stroke-width="0.7" opacity="0.75"/><path d="M1463.7 335.9Q1467.1 337.7 1470.7 336.1" fill="none" stroke="#8a9a3a" stroke-width="0.7" opacity="0.75"/><path d="M1463.4 343.4Q1466.9 345.2 1470.4 343.6" fill="none" stroke="#8a9a3a" stroke-width="0.7" opacity="0.75"/><path d="M1463.2 350.9Q1466.6 352.7 1470.2 351.1" fill="none" stroke="#8a9a3a" stroke-width="0.7" opacity="0.75"/><path d="M1463.0 358.4Q1466.4 360.2 1470.0 358.6" fill="none" stroke="#8a9a3a" stroke-width="0.7" opacity="0.75"/><path d="M1462.7 365.8Q1466.2 367.7 1469.7 366.1" fill="none" stroke="#8a9a3a" stroke-width="0.7" opacity="0.75"/><path d="M1462.5 373.3Q1465.9 375.2 1469.5 373.6" fill="none" stroke="#8a9a3a" stroke-width="0.7" opacity="0.75"/><path d="M1462.3 380.8Q1465.7 382.7 1469.3 381.1" fill="none" stroke="#8a9a3a" stroke-width="0.7" opacity="0.75"/><path d="M1462.0 388.3Q1465.5 390.2 1469.0 388.6" fill="none" stroke="#8a9a3a" stroke-width="0.7" opacity="0.75"/><path d="M1461.8 395.8Q1465.3 397.7 1468.8 396.1" fill="none" stroke="#8a9a3a" stroke-width="0.7" opacity="0.75"/><path d="M1461.6 403.3Q1465.0 405.2 1468.6 403.5" fill="none" stroke="#8a9a3a" stroke-width="0.7" opacity="0.75"/><ellipse cx="1475.7" cy="276.0" rx="3.5" ry="1.6" transform="rotate(1.8 1475.7 276.0)" fill="#00ffee"/><polygon points="1472.2,275.9 1479.2,276.1 1477.7,325.7 1470.7,325.5" fill="#00ffee" /><polygon points="1470.7,324.9 1477.7,325.1 1475.5,396.1 1468.5,395.9" fill="#1a72ee" /><ellipse cx="1472.0" cy="396.0" rx="3.5" ry="1.6" transform="rotate(1.8 1472.0 396.0)" fill="#1a72ee"/><linearGradient id="pg6" gradientUnits="userSpaceOnUse" x1="1472.2" y1="275.9" x2="1479.2" y2="276.1"><stop offset="0" stop-color="#fff" stop-opacity="0.06"/><stop offset="0.4" stop-color="#000" stop-opacity="0"/><stop offset="0.78" stop-color="#000" stop-opacity="0.3"/><stop offset="1" stop-color="#000" stop-opacity="0.225"/></linearGradient><path d="M1472.2 275.9L1479.2 276.1L1475.5 396.1A3.5 1.6 1.8 0 1 1468.5 395.9z" fill="url(#pg6)"/><path d="M1472.0 283.4Q1475.4 285.2 1479.0 283.6" fill="none" stroke="#8a9a3a" stroke-width="0.7" opacity="0.75"/><path d="M1471.7 290.9Q1475.2 292.7 1478.7 291.1" fill="none" stroke="#8a9a3a" stroke-width="0.7" opacity="0.75"/><path d="M1471.5 298.4Q1475.0 300.2 1478.5 298.6" fill="none" stroke="#8a9a3a" stroke-width="0.7" opacity="0.75"/><path d="M1471.3 305.9Q1474.7 307.7 1478.3 306.1" fill="none" stroke="#8a9a3a" stroke-width="0.7" opacity="0.75"/><path d="M1471.0 313.4Q1474.5 315.2 1478.0 313.6" fill="none" stroke="#8a9a3a" stroke-width="0.7" opacity="0.75"/><path d="M1470.8 320.9Q1474.3 322.7 1477.8 321.1" fill="none" stroke="#8a9a3a" stroke-width="0.7" opacity="0.75"/><path d="M1470.6 328.4Q1474.0 330.2 1477.6 328.6" fill="none" stroke="#8a9a3a" stroke-width="0.7" opacity="0.75"/><path d="M1470.4 335.9Q1473.8 337.7 1477.3 336.1" fill="none" stroke="#8a9a3a" stroke-width="0.7" opacity="0.75"/><path d="M1470.1 343.4Q1473.6 345.2 1477.1 343.6" fill="none" stroke="#8a9a3a" stroke-width="0.7" opacity="0.75"/><path d="M1469.9 350.9Q1473.3 352.7 1476.9 351.1" fill="none" stroke="#8a9a3a" stroke-width="0.7" opacity="0.75"/><path d="M1469.7 358.4Q1473.1 360.2 1476.7 358.6" fill="none" stroke="#8a9a3a" stroke-width="0.7" opacity="0.75"/><path d="M1469.4 365.8Q1472.9 367.7 1476.4 366.1" fill="none" stroke="#8a9a3a" stroke-width="0.7" opacity="0.75"/><path d="M1469.2 373.3Q1472.6 375.2 1476.2 373.6" fill="none" stroke="#8a9a3a" stroke-width="0.7" opacity="0.75"/><path d="M1469.0 380.8Q1472.4 382.7 1476.0 381.1" fill="none" stroke="#8a9a3a" stroke-width="0.7" opacity="0.75"/><path d="M1468.7 388.3Q1472.2 390.2 1475.7 388.6" fill="none" stroke="#8a9a3a" stroke-width="0.7" opacity="0.75"/><polygon points="1441.5,275.4 1462.0,270.0 1481.3,271.4 1460.0,277.0" fill="#33ffcc" /><polygon points="1455.0,230.0 1469.3,230.0 1469.3,251.5 1455.0,251.5" fill="#00ee00" /><polygon points="1455.0,251.5 1469.3,251.5 1469.3,270.0 1455.0,270.0" fill="#22eeaa" /><ellipse cx="1341.0" cy="353.0" rx="3.8" ry="1.7" transform="rotate(0.5 1341.0 353.0)" fill="#22ee99"/><polygon points="1337.3,353.0 1344.7,353.0 1344.1,420.6 1336.6,420.6" fill="#22ee99" /><polygon points="1336.6,420.0 1344.1,420.0 1343.4,505.6 1335.9,505.6" fill="#00ffee" /><polygon points="1335.9,505.0 1343.4,505.0 1342.7,572.0 1335.3,572.0" fill="#1a72ee" /><ellipse cx="1339.0" cy="572.0" rx="3.8" ry="1.7" transform="rotate(0.5 1339.0 572.0)" fill="#1a72ee"/><linearGradient id="pg7" gradientUnits="userSpaceOnUse" x1="1337.3" y1="353.0" x2="1344.7" y2="353.0"><stop offset="0" stop-color="#fff" stop-opacity="0.06"/><stop offset="0.4" stop-color="#000" stop-opacity="0"/><stop offset="0.78" stop-color="#000" stop-opacity="0.3"/><stop offset="1" stop-color="#000" stop-opacity="0.225"/></linearGradient><path d="M1337.3 353.0L1344.7 353.0L1342.7 572.0A3.8 1.7 0.5 0 1 1335.3 572.0z" fill="url(#pg7)"/><path d="M1337.2 362.0Q1340.9 363.9 1344.7 362.0" fill="none" stroke="#8a9a3a" stroke-width="0.7" opacity="0.75"/><path d="M1337.1 371.0Q1340.8 372.9 1344.6 371.0" fill="none" stroke="#8a9a3a" stroke-width="0.7" opacity="0.75"/><path d="M1337.0 380.0Q1340.7 381.9 1344.5 380.0" fill="none" stroke="#8a9a3a" stroke-width="0.7" opacity="0.75"/><path d="M1336.9 389.0Q1340.7 390.9 1344.4 389.0" fill="none" stroke="#8a9a3a" stroke-width="0.7" opacity="0.75"/><path d="M1336.8 398.0Q1340.6 399.9 1344.3 398.0" fill="none" stroke="#8a9a3a" stroke-width="0.7" opacity="0.75"/><path d="M1336.8 407.0Q1340.5 408.9 1344.3 407.0" fill="none" stroke="#8a9a3a" stroke-width="0.7" opacity="0.75"/><path d="M1336.7 416.0Q1340.4 417.9 1344.2 416.0" fill="none" stroke="#8a9a3a" stroke-width="0.7" opacity="0.75"/><path d="M1336.6 425.0Q1340.3 426.9 1344.1 425.0" fill="none" stroke="#8a9a3a" stroke-width="0.7" opacity="0.75"/><path d="M1336.5 434.0Q1340.2 435.9 1344.0 434.0" fill="none" stroke="#8a9a3a" stroke-width="0.7" opacity="0.75"/><path d="M1336.4 443.0Q1340.2 444.9 1343.9 443.0" fill="none" stroke="#8a9a3a" stroke-width="0.7" opacity="0.75"/><path d="M1336.3 452.0Q1340.1 453.9 1343.8 452.0" fill="none" stroke="#8a9a3a" stroke-width="0.7" opacity="0.75"/><path d="M1336.3 461.0Q1340.0 462.9 1343.8 461.0" fill="none" stroke="#8a9a3a" stroke-width="0.7" opacity="0.75"/><path d="M1336.2 470.0Q1339.9 471.9 1343.7 470.0" fill="none" stroke="#8a9a3a" stroke-width="0.7" opacity="0.75"/><path d="M1336.1 479.0Q1339.8 480.9 1343.6 479.0" fill="none" stroke="#8a9a3a" stroke-width="0.7" opacity="0.75"/><path d="M1336.0 488.0Q1339.8 489.9 1343.5 488.0" fill="none" stroke="#8a9a3a" stroke-width="0.7" opacity="0.75"/><path d="M1335.9 497.0Q1339.7 498.9 1343.4 497.0" fill="none" stroke="#8a9a3a" stroke-width="0.7" opacity="0.75"/><path d="M1335.9 506.0Q1339.6 507.9 1343.4 506.0" fill="none" stroke="#8a9a3a" stroke-width="0.7" opacity="0.75"/><path d="M1335.8 515.0Q1339.5 516.9 1343.3 515.0" fill="none" stroke="#8a9a3a" stroke-width="0.7" opacity="0.75"/><path d="M1335.7 524.0Q1339.4 525.9 1343.2 524.0" fill="none" stroke="#8a9a3a" stroke-width="0.7" opacity="0.75"/><path d="M1335.6 533.0Q1339.3 534.9 1343.1 533.0" fill="none" stroke="#8a9a3a" stroke-width="0.7" opacity="0.75"/><path d="M1335.5 542.0Q1339.3 543.9 1343.0 542.0" fill="none" stroke="#8a9a3a" stroke-width="0.7" opacity="0.75"/><path d="M1335.4 551.0Q1339.2 552.9 1342.9 551.0" fill="none" stroke="#8a9a3a" stroke-width="0.7" opacity="0.75"/><path d="M1335.4 560.0Q1339.1 561.9 1342.9 560.0" fill="none" stroke="#8a9a3a" stroke-width="0.7" opacity="0.75"/><path d="M1335.3 569.0Q1339.0 570.9 1342.8 569.0" fill="none" stroke="#8a9a3a" stroke-width="0.7" opacity="0.75"/><ellipse cx="1356.5" cy="357.0" rx="3.8" ry="1.7" transform="rotate(1.6 1356.5 357.0)" fill="#22ee99"/><polygon points="1352.8,356.9 1360.2,357.1 1358.7,412.7 1351.2,412.5" fill="#22ee99" /><polygon points="1351.2,411.9 1358.7,412.1 1356.3,495.7 1348.8,495.5" fill="#00ffee" /><polygon points="1348.8,494.9 1356.3,495.1 1354.4,562.1 1347.0,561.9" fill="#1a72ee" /><ellipse cx="1350.7" cy="562.0" rx="3.8" ry="1.7" transform="rotate(1.6 1350.7 562.0)" fill="#1a72ee"/><linearGradient id="pg8" gradientUnits="userSpaceOnUse" x1="1352.8" y1="356.9" x2="1360.2" y2="357.1"><stop offset="0" stop-color="#fff" stop-opacity="0.06"/><stop offset="0.4" stop-color="#000" stop-opacity="0"/><stop offset="0.78" stop-color="#000" stop-opacity="0.3"/><stop offset="1" stop-color="#000" stop-opacity="0.225"/></linearGradient><path d="M1352.8 356.9L1360.2 357.1L1354.4 562.1A3.8 1.7 1.6 0 1 1347.0 561.9z" fill="url(#pg8)"/><path d="M1352.5 365.9Q1356.2 367.9 1360.0 366.1" fill="none" stroke="#8a9a3a" stroke-width="0.7" opacity="0.75"/><path d="M1352.2 374.9Q1355.9 376.9 1359.7 375.1" fill="none" stroke="#8a9a3a" stroke-width="0.7" opacity="0.75"/><path d="M1352.0 383.9Q1355.7 385.9 1359.5 384.1" fill="none" stroke="#8a9a3a" stroke-width="0.7" opacity="0.75"/><path d="M1351.7 392.9Q1355.4 394.9 1359.2 393.1" fill="none" stroke="#8a9a3a" stroke-width="0.7" opacity="0.75"/><path d="M1351.5 401.9Q1355.2 403.9 1359.0 402.1" fill="none" stroke="#8a9a3a" stroke-width="0.7" opacity="0.75"/><path d="M1351.2 410.9Q1354.9 412.9 1358.7 411.1" fill="none" stroke="#8a9a3a" stroke-width="0.7" opacity="0.75"/><path d="M1351.0 419.9Q1354.7 421.8 1358.5 420.1" fill="none" stroke="#8a9a3a" stroke-width="0.7" opacity="0.75"/><path d="M1350.7 428.9Q1354.4 430.8 1358.2 429.1" fill="none" stroke="#8a9a3a" stroke-width="0.7" opacity="0.75"/><path d="M1350.5 437.9Q1354.2 439.8 1358.0 438.1" fill="none" stroke="#8a9a3a" stroke-width="0.7" opacity="0.75"/><path d="M1350.2 446.9Q1353.9 448.8 1357.7 447.1" fill="none" stroke="#8a9a3a" stroke-width="0.7" opacity="0.75"/><path d="M1350.0 455.9Q1353.6 457.8 1357.4 456.1" fill="none" stroke="#8a9a3a" stroke-width="0.7" opacity="0.75"/><path d="M1349.7 464.9Q1353.4 466.8 1357.2 465.1" fill="none" stroke="#8a9a3a" stroke-width="0.7" opacity="0.75"/><path d="M1349.4 473.8Q1353.1 475.8 1356.9 474.1" fill="none" stroke="#8a9a3a" stroke-width="0.7" opacity="0.75"/><path d="M1349.2 482.8Q1352.9 484.8 1356.7 483.1" fill="none" stroke="#8a9a3a" stroke-width="0.7" opacity="0.75"/><path d="M1348.9 491.8Q1352.6 493.8 1356.4 492.1" fill="none" stroke="#8a9a3a" stroke-width="0.7" opacity="0.75"/><path d="M1348.7 500.8Q1352.4 502.8 1356.2 501.0" fill="none" stroke="#8a9a3a" stroke-width="0.7" opacity="0.75"/><path d="M1348.4 509.8Q1352.1 511.8 1355.9 510.0" fill="none" stroke="#8a9a3a" stroke-width="0.7" opacity="0.75"/><path d="M1348.2 518.8Q1351.9 520.8 1355.7 519.0" fill="none" stroke="#8a9a3a" stroke-width="0.7" opacity="0.75"/><path d="M1347.9 527.8Q1351.6 529.8 1355.4 528.0" fill="none" stroke="#8a9a3a" stroke-width="0.7" opacity="0.75"/><path d="M1347.7 536.8Q1351.4 538.8 1355.2 537.0" fill="none" stroke="#8a9a3a" stroke-width="0.7" opacity="0.75"/><path d="M1347.4 545.8Q1351.1 547.8 1354.9 546.0" fill="none" stroke="#8a9a3a" stroke-width="0.7" opacity="0.75"/><path d="M1347.2 554.8Q1350.8 556.8 1354.6 555.0" fill="none" stroke="#8a9a3a" stroke-width="0.7" opacity="0.75"/><ellipse cx="1364.0" cy="357.0" rx="3.8" ry="1.7" transform="rotate(1.5 1364.0 357.0)" fill="#33ee00"/><polygon points="1360.3,356.9 1367.7,357.1 1366.8,395.7 1359.3,395.5" fill="#33ee00" /><polygon points="1359.3,394.9 1366.8,395.1 1363.9,505.7 1356.4,505.5" fill="#00ffee" /><polygon points="1356.4,504.9 1363.9,505.1 1362.1,574.1 1354.7,573.9" fill="#1a72ee" /><ellipse cx="1358.4" cy="574.0" rx="3.8" ry="1.7" transform="rotate(1.5 1358.4 574.0)" fill="#1a72ee"/><linearGradient id="pg9" gradientUnits="userSpaceOnUse" x1="1360.3" y1="356.9" x2="1367.7" y2="357.1"><stop offset="0" stop-color="#fff" stop-opacity="0.06"/><stop offset="0.4" stop-color="#000" stop-opacity="0"/><stop offset="0.78" stop-color="#000" stop-opacity="0.3"/><stop offset="1" stop-color="#000" stop-opacity="0.225"/></linearGradient><path d="M1360.3 356.9L1367.7 357.1L1362.1 574.1A3.8 1.7 1.5 0 1 1354.7 573.9z" fill="url(#pg9)"/><path d="M1360.0 365.9Q1363.7 367.9 1367.5 366.1" fill="none" stroke="#8a9a3a" stroke-width="0.7" opacity="0.75"/><path d="M1359.8 374.9Q1363.5 376.9 1367.3 375.1" fill="none" stroke="#8a9a3a" stroke-width="0.7" opacity="0.75"/><path d="M1359.6 383.9Q1363.3 385.9 1367.1 384.1" fill="none" stroke="#8a9a3a" stroke-width="0.7" opacity="0.75"/><path d="M1359.3 392.9Q1363.0 394.9 1366.8 393.1" fill="none" stroke="#8a9a3a" stroke-width="0.7" opacity="0.75"/><path d="M1359.1 401.9Q1362.8 403.9 1366.6 402.1" fill="none" stroke="#8a9a3a" stroke-width="0.7" opacity="0.75"/><path d="M1358.9 410.9Q1362.6 412.9 1366.4 411.1" fill="none" stroke="#8a9a3a" stroke-width="0.7" opacity="0.75"/><path d="M1358.6 419.9Q1362.3 421.9 1366.1 420.1" fill="none" stroke="#8a9a3a" stroke-width="0.7" opacity="0.75"/><path d="M1358.4 428.9Q1362.1 430.9 1365.9 429.1" fill="none" stroke="#8a9a3a" stroke-width="0.7" opacity="0.75"/><path d="M1358.2 437.9Q1361.9 439.8 1365.7 438.1" fill="none" stroke="#8a9a3a" stroke-width="0.7" opacity="0.75"/><path d="M1357.9 446.9Q1361.6 448.8 1365.4 447.1" fill="none" stroke="#8a9a3a" stroke-width="0.7" opacity="0.75"/><path d="M1357.7 455.9Q1361.4 457.8 1365.2 456.1" fill="none" stroke="#8a9a3a" stroke-width="0.7" opacity="0.75"/><path d="M1357.5 464.9Q1361.2 466.8 1365.0 465.1" fill="none" stroke="#8a9a3a" stroke-width="0.7" opacity="0.75"/><path d="M1357.2 473.9Q1360.9 475.8 1364.7 474.1" fill="none" stroke="#8a9a3a" stroke-width="0.7" opacity="0.75"/><path d="M1357.0 482.9Q1360.7 484.8 1364.5 483.1" fill="none" stroke="#8a9a3a" stroke-width="0.7" opacity="0.75"/><path d="M1356.8 491.9Q1360.5 493.8 1364.3 492.1" fill="none" stroke="#8a9a3a" stroke-width="0.7" opacity="0.75"/><path d="M1356.5 500.9Q1360.2 502.8 1364.0 501.0" fill="none" stroke="#8a9a3a" stroke-width="0.7" opacity="0.75"/><path d="M1356.3 509.9Q1360.0 511.8 1363.8 510.0" fill="none" stroke="#8a9a3a" stroke-width="0.7" opacity="0.75"/><path d="M1356.1 518.8Q1359.8 520.8 1363.6 519.0" fill="none" stroke="#8a9a3a" stroke-width="0.7" opacity="0.75"/><path d="M1355.8 527.8Q1359.5 529.8 1363.3 528.0" fill="none" stroke="#8a9a3a" stroke-width="0.7" opacity="0.75"/><path d="M1355.6 536.8Q1359.3 538.8 1363.1 537.0" fill="none" stroke="#8a9a3a" stroke-width="0.7" opacity="0.75"/><path d="M1355.4 545.8Q1359.1 547.8 1362.9 546.0" fill="none" stroke="#8a9a3a" stroke-width="0.7" opacity="0.75"/><path d="M1355.1 554.8Q1358.8 556.8 1362.6 555.0" fill="none" stroke="#8a9a3a" stroke-width="0.7" opacity="0.75"/><path d="M1354.9 563.8Q1358.6 565.8 1362.4 564.0" fill="none" stroke="#8a9a3a" stroke-width="0.7" opacity="0.75"/><ellipse cx="1370.0" cy="355.0" rx="3.8" ry="1.7" transform="rotate(0.6 1370.0 355.0)" fill="#22ee99"/><polygon points="1366.3,355.0 1373.7,355.0 1373.1,420.6 1365.6,420.6" fill="#22ee99" /><polygon points="1365.6,420.0 1373.1,420.0 1372.3,495.6 1364.8,495.6" fill="#00ffee" /><polygon points="1364.9,495.0 1372.3,495.0 1371.7,555.0 1364.3,555.0" fill="#1a72ee" /><ellipse cx="1368.0" cy="555.0" rx="3.8" ry="1.7" transform="rotate(0.6 1368.0 555.0)" fill="#1a72ee"/><linearGradient id="pg10" gradientUnits="userSpaceOnUse" x1="1366.3" y1="355.0" x2="1373.7" y2="355.0"><stop offset="0" stop-color="#fff" stop-opacity="0.06"/><stop offset="0.4" stop-color="#000" stop-opacity="0"/><stop offset="0.78" stop-color="#000" stop-opacity="0.3"/><stop offset="1" stop-color="#000" stop-opacity="0.225"/></linearGradient><path d="M1366.3 355.0L1373.7 355.0L1371.7 555.0A3.8 1.7 0.6 0 1 1364.3 555.0z" fill="url(#pg10)"/><path d="M1366.2 364.0Q1369.9 365.9 1373.7 364.0" fill="none" stroke="#8a9a3a" stroke-width="0.7" opacity="0.75"/><path d="M1366.1 373.0Q1369.8 374.9 1373.6 373.0" fill="none" stroke="#8a9a3a" stroke-width="0.7" opacity="0.75"/><path d="M1366.0 382.0Q1369.7 383.9 1373.5 382.0" fill="none" stroke="#8a9a3a" stroke-width="0.7" opacity="0.75"/><path d="M1365.9 391.0Q1369.6 392.9 1373.4 391.0" fill="none" stroke="#8a9a3a" stroke-width="0.7" opacity="0.75"/><path d="M1365.8 400.0Q1369.5 401.9 1373.3 400.0" fill="none" stroke="#8a9a3a" stroke-width="0.7" opacity="0.75"/><path d="M1365.7 409.0Q1369.4 410.9 1373.2 409.0" fill="none" stroke="#8a9a3a" stroke-width="0.7" opacity="0.75"/><path d="M1365.6 418.0Q1369.4 419.9 1373.1 418.0" fill="none" stroke="#8a9a3a" stroke-width="0.7" opacity="0.75"/><path d="M1365.5 427.0Q1369.3 428.9 1373.0 427.0" fill="none" stroke="#8a9a3a" stroke-width="0.7" opacity="0.75"/><path d="M1365.4 436.0Q1369.2 437.9 1372.9 436.0" fill="none" stroke="#8a9a3a" stroke-width="0.7" opacity="0.75"/><path d="M1365.4 445.0Q1369.1 446.9 1372.8 445.0" fill="none" stroke="#8a9a3a" stroke-width="0.7" opacity="0.75"/><path d="M1365.3 454.0Q1369.0 455.9 1372.8 454.0" fill="none" stroke="#8a9a3a" stroke-width="0.7" opacity="0.75"/><path d="M1365.2 463.0Q1368.9 464.9 1372.7 463.0" fill="none" stroke="#8a9a3a" stroke-width="0.7" opacity="0.75"/><path d="M1365.1 472.0Q1368.8 473.9 1372.6 472.0" fill="none" stroke="#8a9a3a" stroke-width="0.7" opacity="0.75"/><path d="M1365.0 481.0Q1368.7 482.9 1372.5 481.0" fill="none" stroke="#8a9a3a" stroke-width="0.7" opacity="0.75"/><path d="M1364.9 490.0Q1368.6 491.9 1372.4 490.0" fill="none" stroke="#8a9a3a" stroke-width="0.7" opacity="0.75"/><path d="M1364.8 499.0Q1368.5 500.9 1372.3 499.0" fill="none" stroke="#8a9a3a" stroke-width="0.7" opacity="0.75"/><path d="M1364.7 508.0Q1368.5 509.9 1372.2 508.0" fill="none" stroke="#8a9a3a" stroke-width="0.7" opacity="0.75"/><path d="M1364.6 517.0Q1368.4 518.9 1372.1 517.0" fill="none" stroke="#8a9a3a" stroke-width="0.7" opacity="0.75"/><path d="M1364.5 526.0Q1368.3 527.9 1372.0 526.0" fill="none" stroke="#8a9a3a" stroke-width="0.7" opacity="0.75"/><path d="M1364.5 535.0Q1368.2 536.9 1371.9 535.0" fill="none" stroke="#8a9a3a" stroke-width="0.7" opacity="0.75"/><path d="M1364.4 544.0Q1368.1 545.9 1371.9 544.0" fill="none" stroke="#8a9a3a" stroke-width="0.7" opacity="0.75"/><path d="M1364.3 553.0Q1368.0 554.9 1371.8 553.0" fill="none" stroke="#8a9a3a" stroke-width="0.7" opacity="0.75"/><ellipse cx="1387.0" cy="357.0" rx="3.8" ry="1.7" transform="rotate(1.9 1387.0 357.0)" fill="#22ee99"/><polygon points="1383.3,356.9 1390.7,357.1 1388.9,412.7 1381.4,412.5" fill="#22ee99" /><polygon points="1381.4,411.9 1388.9,412.1 1385.8,505.7 1378.3,505.5" fill="#00ffee" /><polygon points="1378.3,504.9 1385.8,505.1 1383.2,582.1 1375.8,581.9" fill="#1a72ee" /><ellipse cx="1379.5" cy="582.0" rx="3.8" ry="1.7" transform="rotate(1.9 1379.5 582.0)" fill="#1a72ee"/><linearGradient id="pg11" gradientUnits="userSpaceOnUse" x1="1383.3" y1="356.9" x2="1390.7" y2="357.1"><stop offset="0" stop-color="#fff" stop-opacity="0.06"/><stop offset="0.4" stop-color="#000" stop-opacity="0"/><stop offset="0.78" stop-color="#000" stop-opacity="0.3"/><stop offset="1" stop-color="#000" stop-opacity="0.225"/></linearGradient><path d="M1383.3 356.9L1390.7 357.1L1383.2 582.1A3.8 1.7 1.9 0 1 1375.8 581.9z" fill="url(#pg11)"/><path d="M1383.0 365.9Q1386.6 367.9 1390.4 366.1" fill="none" stroke="#8a9a3a" stroke-width="0.7" opacity="0.75"/><path d="M1382.7 374.9Q1386.3 376.9 1390.1 375.1" fill="none" stroke="#8a9a3a" stroke-width="0.7" opacity="0.75"/><path d="M1382.4 383.9Q1386.0 385.9 1389.8 384.1" fill="none" stroke="#8a9a3a" stroke-width="0.7" opacity="0.75"/><path d="M1382.1 392.9Q1385.7 394.9 1389.5 393.1" fill="none" stroke="#8a9a3a" stroke-width="0.7" opacity="0.75"/><path d="M1381.8 401.9Q1385.4 403.8 1389.2 402.1" fill="none" stroke="#8a9a3a" stroke-width="0.7" opacity="0.75"/><path d="M1381.5 410.8Q1385.1 412.8 1388.9 411.1" fill="none" stroke="#8a9a3a" stroke-width="0.7" opacity="0.75"/><path d="M1381.2 419.8Q1384.8 421.8 1388.6 420.1" fill="none" stroke="#8a9a3a" stroke-width="0.7" opacity="0.75"/><path d="M1380.9 428.8Q1384.5 430.8 1388.3 429.1" fill="none" stroke="#8a9a3a" stroke-width="0.7" opacity="0.75"/><path d="M1380.6 437.8Q1384.2 439.8 1388.0 438.1" fill="none" stroke="#8a9a3a" stroke-width="0.7" opacity="0.75"/><path d="M1380.3 446.8Q1383.9 448.8 1387.7 447.1" fill="none" stroke="#8a9a3a" stroke-width="0.7" opacity="0.75"/><path d="M1380.0 455.8Q1383.6 457.8 1387.4 456.1" fill="none" stroke="#8a9a3a" stroke-width="0.7" opacity="0.75"/><path d="M1379.7 464.8Q1383.3 466.8 1387.1 465.1" fill="none" stroke="#8a9a3a" stroke-width="0.7" opacity="0.75"/><path d="M1379.4 473.8Q1383.0 475.8 1386.9 474.1" fill="none" stroke="#8a9a3a" stroke-width="0.7" opacity="0.75"/><path d="M1379.1 482.8Q1382.7 484.8 1386.6 483.1" fill="none" stroke="#8a9a3a" stroke-width="0.7" opacity="0.75"/><path d="M1378.8 491.8Q1382.4 493.8 1386.3 492.0" fill="none" stroke="#8a9a3a" stroke-width="0.7" opacity="0.75"/><path d="M1378.5 500.8Q1382.1 502.8 1386.0 501.0" fill="none" stroke="#8a9a3a" stroke-width="0.7" opacity="0.75"/><path d="M1378.2 509.8Q1381.8 511.8 1385.7 510.0" fill="none" stroke="#8a9a3a" stroke-width="0.7" opacity="0.75"/><path d="M1377.9 518.8Q1381.5 520.8 1385.4 519.0" fill="none" stroke="#8a9a3a" stroke-width="0.7" opacity="0.75"/><path d="M1377.6 527.8Q1381.2 529.8 1385.1 528.0" fill="none" stroke="#8a9a3a" stroke-width="0.7" opacity="0.75"/><path d="M1377.3 536.8Q1380.9 538.8 1384.8 537.0" fill="none" stroke="#8a9a3a" stroke-width="0.7" opacity="0.75"/><path d="M1377.0 545.8Q1380.6 547.8 1384.5 546.0" fill="none" stroke="#8a9a3a" stroke-width="0.7" opacity="0.75"/><path d="M1376.7 554.8Q1380.3 556.8 1384.2 555.0" fill="none" stroke="#8a9a3a" stroke-width="0.7" opacity="0.75"/><path d="M1376.4 563.8Q1380.0 565.8 1383.9 564.0" fill="none" stroke="#8a9a3a" stroke-width="0.7" opacity="0.75"/><path d="M1376.1 572.8Q1379.7 574.8 1383.6 573.0" fill="none" stroke="#8a9a3a" stroke-width="0.7" opacity="0.75"/><ellipse cx="1393.0" cy="355.0" rx="3.8" ry="1.7" transform="rotate(0.5 1393.0 355.0)" fill="#33ee00"/><polygon points="1389.3,355.0 1396.7,355.0 1396.4,395.6 1388.9,395.6" fill="#33ee00" /><polygon points="1388.9,395.0 1396.4,395.0 1395.4,495.6 1387.9,495.6" fill="#00ffee" /><polygon points="1387.9,495.0 1395.4,495.0 1394.7,570.0 1387.3,570.0" fill="#1a72ee" /><ellipse cx="1391.0" cy="570.0" rx="3.8" ry="1.7" transform="rotate(0.5 1391.0 570.0)" fill="#1a72ee"/><linearGradient id="pg12" gradientUnits="userSpaceOnUse" x1="1389.3" y1="355.0" x2="1396.7" y2="355.0"><stop offset="0" stop-color="#fff" stop-opacity="0.06"/><stop offset="0.4" stop-color="#000" stop-opacity="0"/><stop offset="0.78" stop-color="#000" stop-opacity="0.3"/><stop offset="1" stop-color="#000" stop-opacity="0.225"/></linearGradient><path d="M1389.3 355.0L1396.7 355.0L1394.7 570.0A3.8 1.7 0.5 0 1 1387.3 570.0z" fill="url(#pg12)"/><path d="M1389.2 364.0Q1392.9 365.9 1396.7 364.0" fill="none" stroke="#8a9a3a" stroke-width="0.7" opacity="0.75"/><path d="M1389.1 373.0Q1392.8 374.9 1396.6 373.0" fill="none" stroke="#8a9a3a" stroke-width="0.7" opacity="0.75"/><path d="M1389.0 382.0Q1392.7 383.9 1396.5 382.0" fill="none" stroke="#8a9a3a" stroke-width="0.7" opacity="0.75"/><path d="M1388.9 391.0Q1392.6 392.9 1396.4 391.0" fill="none" stroke="#8a9a3a" stroke-width="0.7" opacity="0.75"/><path d="M1388.8 400.0Q1392.6 401.9 1396.3 400.0" fill="none" stroke="#8a9a3a" stroke-width="0.7" opacity="0.75"/><path d="M1388.7 409.0Q1392.5 410.9 1396.2 409.0" fill="none" stroke="#8a9a3a" stroke-width="0.7" opacity="0.75"/><path d="M1388.7 418.0Q1392.4 419.9 1396.2 418.0" fill="none" stroke="#8a9a3a" stroke-width="0.7" opacity="0.75"/><path d="M1388.6 427.0Q1392.3 428.9 1396.1 427.0" fill="none" stroke="#8a9a3a" stroke-width="0.7" opacity="0.75"/><path d="M1388.5 436.0Q1392.2 437.9 1396.0 436.0" fill="none" stroke="#8a9a3a" stroke-width="0.7" opacity="0.75"/><path d="M1388.4 445.0Q1392.1 446.9 1395.9 445.0" fill="none" stroke="#8a9a3a" stroke-width="0.7" opacity="0.75"/><path d="M1388.3 454.0Q1392.1 455.9 1395.8 454.0" fill="none" stroke="#8a9a3a" stroke-width="0.7" opacity="0.75"/><path d="M1388.2 463.0Q1392.0 464.9 1395.7 463.0" fill="none" stroke="#8a9a3a" stroke-width="0.7" opacity="0.75"/><path d="M1388.2 472.0Q1391.9 473.9 1395.7 472.0" fill="none" stroke="#8a9a3a" stroke-width="0.7" opacity="0.75"/><path d="M1388.1 481.0Q1391.8 482.9 1395.6 481.0" fill="none" stroke="#8a9a3a" stroke-width="0.7" opacity="0.75"/><path d="M1388.0 490.0Q1391.7 491.9 1395.5 490.0" fill="none" stroke="#8a9a3a" stroke-width="0.7" opacity="0.75"/><path d="M1387.9 499.0Q1391.6 500.9 1395.4 499.0" fill="none" stroke="#8a9a3a" stroke-width="0.7" opacity="0.75"/><path d="M1387.8 508.0Q1391.6 509.9 1395.3 508.0" fill="none" stroke="#8a9a3a" stroke-width="0.7" opacity="0.75"/><path d="M1387.7 517.0Q1391.5 518.9 1395.2 517.0" fill="none" stroke="#8a9a3a" stroke-width="0.7" opacity="0.75"/><path d="M1387.7 526.0Q1391.4 527.9 1395.2 526.0" fill="none" stroke="#8a9a3a" stroke-width="0.7" opacity="0.75"/><path d="M1387.6 535.0Q1391.3 536.9 1395.1 535.0" fill="none" stroke="#8a9a3a" stroke-width="0.7" opacity="0.75"/><path d="M1387.5 544.0Q1391.2 545.9 1395.0 544.0" fill="none" stroke="#8a9a3a" stroke-width="0.7" opacity="0.75"/><path d="M1387.4 553.0Q1391.1 554.9 1394.9 553.0" fill="none" stroke="#8a9a3a" stroke-width="0.7" opacity="0.75"/><path d="M1387.3 562.0Q1391.1 563.9 1394.8 562.0" fill="none" stroke="#8a9a3a" stroke-width="0.7" opacity="0.75"/><ellipse cx="1402.5" cy="353.0" rx="3.8" ry="1.7" transform="rotate(0.5 1402.5 353.0)" fill="#22ee99"/><polygon points="1398.8,353.0 1406.2,353.0 1405.6,420.6 1398.1,420.6" fill="#22ee99" /><polygon points="1398.1,420.0 1405.6,420.0 1404.8,505.6 1397.3,505.6" fill="#00ffee" /><polygon points="1397.3,505.0 1404.8,505.0 1404.3,558.0 1396.9,558.0" fill="#1a72ee" /><ellipse cx="1400.6" cy="558.0" rx="3.8" ry="1.7" transform="rotate(0.5 1400.6 558.0)" fill="#1a72ee"/><linearGradient id="pg13" gradientUnits="userSpaceOnUse" x1="1398.8" y1="353.0" x2="1406.2" y2="353.0"><stop offset="0" stop-color="#fff" stop-opacity="0.06"/><stop offset="0.4" stop-color="#000" stop-opacity="0"/><stop offset="0.78" stop-color="#000" stop-opacity="0.3"/><stop offset="1" stop-color="#000" stop-opacity="0.225"/></linearGradient><path d="M1398.8 353.0L1406.2 353.0L1404.3 558.0A3.8 1.7 0.5 0 1 1396.9 558.0z" fill="url(#pg13)"/><path d="M1398.7 362.0Q1402.4 363.9 1406.2 362.0" fill="none" stroke="#8a9a3a" stroke-width="0.7" opacity="0.75"/><path d="M1398.6 371.0Q1402.3 372.9 1406.1 371.0" fill="none" stroke="#8a9a3a" stroke-width="0.7" opacity="0.75"/><path d="M1398.5 380.0Q1402.2 381.9 1406.0 380.0" fill="none" stroke="#8a9a3a" stroke-width="0.7" opacity="0.75"/><path d="M1398.4 389.0Q1402.1 390.9 1405.9 389.0" fill="none" stroke="#8a9a3a" stroke-width="0.7" opacity="0.75"/><path d="M1398.3 398.0Q1402.1 399.9 1405.8 398.0" fill="none" stroke="#8a9a3a" stroke-width="0.7" opacity="0.75"/><path d="M1398.2 407.0Q1402.0 408.9 1405.7 407.0" fill="none" stroke="#8a9a3a" stroke-width="0.7" opacity="0.75"/><path d="M1398.2 416.0Q1401.9 417.9 1405.7 416.0" fill="none" stroke="#8a9a3a" stroke-width="0.7" opacity="0.75"/><path d="M1398.1 425.0Q1401.8 426.9 1405.6 425.0" fill="none" stroke="#8a9a3a" stroke-width="0.7" opacity="0.75"/><path d="M1398.0 434.0Q1401.7 435.9 1405.5 434.0" fill="none" stroke="#8a9a3a" stroke-width="0.7" opacity="0.75"/><path d="M1397.9 443.0Q1401.6 444.9 1405.4 443.0" fill="none" stroke="#8a9a3a" stroke-width="0.7" opacity="0.75"/><path d="M1397.8 452.0Q1401.6 453.9 1405.3 452.0" fill="none" stroke="#8a9a3a" stroke-width="0.7" opacity="0.75"/><path d="M1397.7 461.0Q1401.5 462.9 1405.2 461.0" fill="none" stroke="#8a9a3a" stroke-width="0.7" opacity="0.75"/><path d="M1397.7 470.0Q1401.4 471.9 1405.2 470.0" fill="none" stroke="#8a9a3a" stroke-width="0.7" opacity="0.75"/><path d="M1397.6 479.0Q1401.3 480.9 1405.1 479.0" fill="none" stroke="#8a9a3a" stroke-width="0.7" opacity="0.75"/><path d="M1397.5 488.0Q1401.2 489.9 1405.0 488.0" fill="none" stroke="#8a9a3a" stroke-width="0.7" opacity="0.75"/><path d="M1397.4 497.0Q1401.1 498.9 1404.9 497.0" fill="none" stroke="#8a9a3a" stroke-width="0.7" opacity="0.75"/><path d="M1397.3 506.0Q1401.1 507.9 1404.8 506.0" fill="none" stroke="#8a9a3a" stroke-width="0.7" opacity="0.75"/><path d="M1397.2 515.0Q1401.0 516.9 1404.7 515.0" fill="none" stroke="#8a9a3a" stroke-width="0.7" opacity="0.75"/><path d="M1397.2 524.0Q1400.9 525.9 1404.7 524.0" fill="none" stroke="#8a9a3a" stroke-width="0.7" opacity="0.75"/><path d="M1397.1 533.0Q1400.8 534.9 1404.6 533.0" fill="none" stroke="#8a9a3a" stroke-width="0.7" opacity="0.75"/><path d="M1397.0 542.0Q1400.7 543.9 1404.5 542.0" fill="none" stroke="#8a9a3a" stroke-width="0.7" opacity="0.75"/><path d="M1396.9 551.0Q1400.6 552.9 1404.4 551.0" fill="none" stroke="#8a9a3a" stroke-width="0.7" opacity="0.75"/><ellipse cx="1412.0" cy="350.0" rx="3.8" ry="1.7" transform="rotate(1.8 1412.0 350.0)" fill="#22ee99"/><polygon points="1408.3,349.9 1415.7,350.1 1413.8,412.7 1406.3,412.5" fill="#22ee99" /><polygon points="1406.3,411.9 1413.8,412.1 1411.2,495.7 1403.7,495.5" fill="#00ffee" /><polygon points="1403.7,494.9 1411.2,495.1 1409.7,543.1 1402.3,542.9" fill="#1a72ee" /><ellipse cx="1406.0" cy="543.0" rx="3.8" ry="1.7" transform="rotate(1.8 1406.0 543.0)" fill="#1a72ee"/><linearGradient id="pg14" gradientUnits="userSpaceOnUse" x1="1408.3" y1="349.9" x2="1415.7" y2="350.1"><stop offset="0" stop-color="#fff" stop-opacity="0.06"/><stop offset="0.4" stop-color="#000" stop-opacity="0"/><stop offset="0.78" stop-color="#000" stop-opacity="0.3"/><stop offset="1" stop-color="#000" stop-opacity="0.225"/></linearGradient><path d="M1408.3 349.9L1415.7 350.1L1409.7 543.1A3.8 1.7 1.8 0 1 1402.3 542.9z" fill="url(#pg14)"/><path d="M1408.0 358.9Q1411.7 360.9 1415.5 359.1" fill="none" stroke="#8a9a3a" stroke-width="0.7" opacity="0.75"/><path d="M1407.7 367.9Q1411.4 369.9 1415.2 368.1" fill="none" stroke="#8a9a3a" stroke-width="0.7" opacity="0.75"/><path d="M1407.4 376.9Q1411.1 378.9 1414.9 377.1" fill="none" stroke="#8a9a3a" stroke-width="0.7" opacity="0.75"/><path d="M1407.1 385.9Q1410.8 387.9 1414.6 386.1" fill="none" stroke="#8a9a3a" stroke-width="0.7" opacity="0.75"/><path d="M1406.9 394.9Q1410.5 396.9 1414.3 395.1" fill="none" stroke="#8a9a3a" stroke-width="0.7" opacity="0.75"/><path d="M1406.6 403.9Q1410.3 405.8 1414.1 404.1" fill="none" stroke="#8a9a3a" stroke-width="0.7" opacity="0.75"/><path d="M1406.3 412.9Q1410.0 414.8 1413.8 413.1" fill="none" stroke="#8a9a3a" stroke-width="0.7" opacity="0.75"/><path d="M1406.0 421.8Q1409.7 423.8 1413.5 422.1" fill="none" stroke="#8a9a3a" stroke-width="0.7" opacity="0.75"/><path d="M1405.7 430.8Q1409.4 432.8 1413.2 431.1" fill="none" stroke="#8a9a3a" stroke-width="0.7" opacity="0.75"/><path d="M1405.5 439.8Q1409.1 441.8 1413.0 440.1" fill="none" stroke="#8a9a3a" stroke-width="0.7" opacity="0.75"/><path d="M1405.2 448.8Q1408.9 450.8 1412.7 449.1" fill="none" stroke="#8a9a3a" stroke-width="0.7" opacity="0.75"/><path d="M1404.9 457.8Q1408.6 459.8 1412.4 458.1" fill="none" stroke="#8a9a3a" stroke-width="0.7" opacity="0.75"/><path d="M1404.6 466.8Q1408.3 468.8 1412.1 467.1" fill="none" stroke="#8a9a3a" stroke-width="0.7" opacity="0.75"/><path d="M1404.3 475.8Q1408.0 477.8 1411.8 476.1" fill="none" stroke="#8a9a3a" stroke-width="0.7" opacity="0.75"/><path d="M1404.1 484.8Q1407.7 486.8 1411.6 485.1" fill="none" stroke="#8a9a3a" stroke-width="0.7" opacity="0.75"/><path d="M1403.8 493.8Q1407.5 495.8 1411.3 494.0" fill="none" stroke="#8a9a3a" stroke-width="0.7" opacity="0.75"/><path d="M1403.5 502.8Q1407.2 504.8 1411.0 503.0" fill="none" stroke="#8a9a3a" stroke-width="0.7" opacity="0.75"/><path d="M1403.2 511.8Q1406.9 513.8 1410.7 512.0" fill="none" stroke="#8a9a3a" stroke-width="0.7" opacity="0.75"/><path d="M1402.9 520.8Q1406.6 522.8 1410.4 521.0" fill="none" stroke="#8a9a3a" stroke-width="0.7" opacity="0.75"/><path d="M1402.7 529.8Q1406.3 531.8 1410.2 530.0" fill="none" stroke="#8a9a3a" stroke-width="0.7" opacity="0.75"/><path d="M1402.4 538.8Q1406.1 540.8 1409.9 539.0" fill="none" stroke="#8a9a3a" stroke-width="0.7" opacity="0.75"/><polygon points="1337.0,353.4 1362.0,344.7 1417.6,347.0 1405.0,356.0" fill="#44ee00" /><polygon points="1367.4,262.0 1389.0,262.0 1386.5,350.0 1363.4,350.0" fill="#66ee00" /><polygon points="1389.0,262.0 1399.0,262.0 1395.0,350.0 1386.5,350.0" fill="#8acc00" /><linearGradient id="bgd" x1="1395" y1="0" x2="1467" y2="0" gradientUnits="userSpaceOnUse"><stop offset="0" stop-color="#88a800"/><stop offset="0.45" stop-color="#a09000"/><stop offset="0.7" stop-color="#a04000"/><stop offset="0.85" stop-color="#a00000"/><stop offset="1" stop-color="#c03000"/></linearGradient><polygon points="1390.0,222.0 1416.0,221.0 1467.0,231.0 1441.5,249.0 1403.0,262.0 1390.0,262.0" fill="url(#bgd)" /><linearGradient id="btg" x1="0" y1="205" x2="0" y2="232" gradientUnits="userSpaceOnUse"><stop offset="0" stop-color="#88ee00"/><stop offset="0.3" stop-color="#ccff00"/><stop offset="0.5" stop-color="#ffee00"/><stop offset="0.7" stop-color="#ff9900"/><stop offset="0.85" stop-color="#ff2200"/><stop offset="1" stop-color="#ee0000"/></linearGradient><polygon points="1411.0,222.0 1436.7,203.8 1491.6,205.4 1471.7,229.2 1457.0,231.0 1416.0,221.0" fill="url(#btg)" /><polygon points="1346.0,220.5 1411.0,222.0 1403.0,262.0 1364.0,261.0 1364.0,235.0 1359.5,224.5" fill="#ccee00" /><polygon points="1370.0,225.0 1395.0,225.0 1400.0,232.0 1396.0,258.0 1371.0,258.0" fill="none" stroke="#8a9a00" stroke-width="0.7"/><polygon points="1374.0,234.0 1381.0,234.0 1381.0,246.0 1374.0,246.0" fill="#8a9a00" /><ellipse cx="1124.0" cy="510.0" rx="6.5" ry="2.9" transform="rotate(-2.6 1124.0 510.0)" fill="#22ee99"/><polygon points="1117.5,510.3 1130.5,509.7 1134.5,600.3 1121.5,600.9" fill="#22ee99" /><polygon points="1121.5,600.3 1134.5,599.7 1138.6,690.3 1125.6,690.9" fill="#00ffee" /><polygon points="1125.5,690.3 1138.5,689.7 1142.5,778.7 1129.5,779.3" fill="#1a72ee" /><ellipse cx="1136.0" cy="779.0" rx="6.5" ry="2.9" transform="rotate(-2.6 1136.0 779.0)" fill="#1a72ee"/><linearGradient id="pg15" gradientUnits="userSpaceOnUse" x1="1117.5" y1="510.3" x2="1130.5" y2="509.7"><stop offset="0" stop-color="#fff" stop-opacity="0.06"/><stop offset="0.4" stop-color="#000" stop-opacity="0"/><stop offset="0.78" stop-color="#000" stop-opacity="0.3"/><stop offset="1" stop-color="#000" stop-opacity="0.225"/></linearGradient><path d="M1117.5 510.3L1130.5 509.7L1142.5 778.7A6.5 2.9 -2.6 0 1 1129.5 779.3z" fill="url(#pg15)"/><path d="M1118.1 523.8Q1124.7 526.7 1131.1 523.2" fill="none" stroke="#8a9a3a" stroke-width="0.7" opacity="0.75"/><path d="M1118.7 537.3Q1125.3 540.2 1131.7 536.7" fill="none" stroke="#8a9a3a" stroke-width="0.7" opacity="0.75"/><path d="M1119.3 550.7Q1125.9 553.7 1132.3 550.2" fill="none" stroke="#8a9a3a" stroke-width="0.7" opacity="0.75"/><path d="M1119.9 564.2Q1126.6 567.2 1132.9 563.7" fill="none" stroke="#8a9a3a" stroke-width="0.7" opacity="0.75"/><path d="M1120.5 577.7Q1127.2 580.7 1133.5 577.1" fill="none" stroke="#8a9a3a" stroke-width="0.7" opacity="0.75"/><path d="M1121.1 591.2Q1127.8 594.2 1134.1 590.6" fill="none" stroke="#8a9a3a" stroke-width="0.7" opacity="0.75"/><path d="M1121.7 604.7Q1128.4 607.7 1134.7 604.1" fill="none" stroke="#8a9a3a" stroke-width="0.7" opacity="0.75"/><path d="M1122.3 618.2Q1129.0 621.1 1135.3 617.6" fill="none" stroke="#8a9a3a" stroke-width="0.7" opacity="0.75"/><path d="M1122.9 631.7Q1129.6 634.6 1135.9 631.1" fill="none" stroke="#8a9a3a" stroke-width="0.7" opacity="0.75"/><path d="M1123.5 645.2Q1130.2 648.1 1136.5 644.6" fill="none" stroke="#8a9a3a" stroke-width="0.7" opacity="0.75"/><path d="M1124.1 658.6Q1130.8 661.6 1137.1 658.1" fill="none" stroke="#8a9a3a" stroke-width="0.7" opacity="0.75"/><path d="M1124.7 672.1Q1131.4 675.1 1137.7 671.5" fill="none" stroke="#8a9a3a" stroke-width="0.7" opacity="0.75"/><path d="M1125.3 685.6Q1132.0 688.6 1138.3 685.0" fill="none" stroke="#8a9a3a" stroke-width="0.7" opacity="0.75"/><path d="M1125.9 699.1Q1132.6 702.1 1138.9 698.5" fill="none" stroke="#8a9a3a" stroke-width="0.7" opacity="0.75"/><path d="M1126.5 712.6Q1133.2 715.5 1139.5 712.0" fill="none" stroke="#8a9a3a" stroke-width="0.7" opacity="0.75"/><path d="M1127.1 726.1Q1133.8 729.0 1140.1 725.5" fill="none" stroke="#8a9a3a" stroke-width="0.7" opacity="0.75"/><path d="M1127.7 739.6Q1134.4 742.5 1140.7 739.0" fill="none" stroke="#8a9a3a" stroke-width="0.7" opacity="0.75"/><path d="M1128.3 753.0Q1135.0 756.0 1141.3 752.5" fill="none" stroke="#8a9a3a" stroke-width="0.7" opacity="0.75"/><path d="M1128.9 766.5Q1135.6 769.5 1141.9 766.0" fill="none" stroke="#8a9a3a" stroke-width="0.7" opacity="0.75"/><ellipse cx="1093.0" cy="510.0" rx="6.5" ry="2.9" transform="rotate(-3.1 1093.0 510.0)" fill="#22ee99"/><polygon points="1086.5,510.3 1099.5,509.7 1104.4,600.3 1091.4,600.9" fill="#22ee99" /><polygon points="1091.3,600.3 1104.3,599.7 1108.5,677.3 1095.5,677.9" fill="#00ffee" /><polygon points="1095.5,677.3 1108.4,676.7 1113.5,770.7 1100.5,771.3" fill="#1a72ee" /><ellipse cx="1107.0" cy="771.0" rx="6.5" ry="2.9" transform="rotate(-3.1 1107.0 771.0)" fill="#1a72ee"/><linearGradient id="pg16" gradientUnits="userSpaceOnUse" x1="1086.5" y1="510.3" x2="1099.5" y2="509.7"><stop offset="0" stop-color="#fff" stop-opacity="0.06"/><stop offset="0.4" stop-color="#000" stop-opacity="0"/><stop offset="0.78" stop-color="#000" stop-opacity="0.3"/><stop offset="1" stop-color="#000" stop-opacity="0.225"/></linearGradient><path d="M1086.5 510.3L1099.5 509.7L1113.5 770.7A6.5 2.9 -3.1 0 1 1100.5 771.3z" fill="url(#pg16)"/><path d="M1087.2 523.8Q1093.9 526.7 1100.2 523.1" fill="none" stroke="#8a9a3a" stroke-width="0.7" opacity="0.75"/><path d="M1088.0 537.3Q1094.6 540.2 1100.9 536.6" fill="none" stroke="#8a9a3a" stroke-width="0.7" opacity="0.75"/><path d="M1088.7 550.8Q1095.3 553.7 1101.7 550.1" fill="none" stroke="#8a9a3a" stroke-width="0.7" opacity="0.75"/><path d="M1089.4 564.3Q1096.1 567.2 1102.4 563.6" fill="none" stroke="#8a9a3a" stroke-width="0.7" opacity="0.75"/><path d="M1090.1 577.8Q1096.8 580.6 1103.1 577.1" fill="none" stroke="#8a9a3a" stroke-width="0.7" opacity="0.75"/><path d="M1090.8 591.2Q1097.5 594.1 1103.8 590.5" fill="none" stroke="#8a9a3a" stroke-width="0.7" opacity="0.75"/><path d="M1091.6 604.7Q1098.2 607.6 1104.6 604.0" fill="none" stroke="#8a9a3a" stroke-width="0.7" opacity="0.75"/><path d="M1092.3 618.2Q1099.0 621.1 1105.3 617.5" fill="none" stroke="#8a9a3a" stroke-width="0.7" opacity="0.75"/><path d="M1093.0 631.7Q1099.7 634.6 1106.0 631.0" fill="none" stroke="#8a9a3a" stroke-width="0.7" opacity="0.75"/><path d="M1093.7 645.2Q1100.4 648.1 1106.7 644.5" fill="none" stroke="#8a9a3a" stroke-width="0.7" opacity="0.75"/><path d="M1094.5 658.6Q1101.1 661.5 1107.4 657.9" fill="none" stroke="#8a9a3a" stroke-width="0.7" opacity="0.75"/><path d="M1095.2 672.1Q1101.9 675.0 1108.2 671.4" fill="none" stroke="#8a9a3a" stroke-width="0.7" opacity="0.75"/><path d="M1095.9 685.6Q1102.6 688.5 1108.9 684.9" fill="none" stroke="#8a9a3a" stroke-width="0.7" opacity="0.75"/><path d="M1096.6 699.1Q1103.3 702.0 1109.6 698.4" fill="none" stroke="#8a9a3a" stroke-width="0.7" opacity="0.75"/><path d="M1097.4 712.6Q1104.0 715.5 1110.3 711.9" fill="none" stroke="#8a9a3a" stroke-width="0.7" opacity="0.75"/><path d="M1098.1 726.0Q1104.7 728.9 1111.1 725.3" fill="none" stroke="#8a9a3a" stroke-width="0.7" opacity="0.75"/><path d="M1098.8 739.5Q1105.5 742.4 1111.8 738.8" fill="none" stroke="#8a9a3a" stroke-width="0.7" opacity="0.75"/><path d="M1099.5 753.0Q1106.2 755.9 1112.5 752.3" fill="none" stroke="#8a9a3a" stroke-width="0.7" opacity="0.75"/><path d="M1100.2 766.5Q1106.9 769.4 1113.2 765.8" fill="none" stroke="#8a9a3a" stroke-width="0.7" opacity="0.75"/><ellipse cx="1059.0" cy="515.0" rx="6.5" ry="2.9" transform="rotate(-3.8 1059.0 515.0)" fill="#33ee00"/><polygon points="1052.5,515.4 1065.5,514.6 1069.1,568.2 1056.1,569.0" fill="#33ee00" /><polygon points="1056.1,568.4 1069.0,567.6 1074.6,650.2 1061.6,651.0" fill="#22ee99" /><polygon points="1061.6,650.4 1074.5,649.6 1080.2,733.2 1067.2,734.0" fill="#00ffee" /><polygon points="1067.2,733.4 1080.1,732.6 1084.5,797.6 1071.5,798.4" fill="#1a72ee" /><ellipse cx="1078.0" cy="798.0" rx="6.5" ry="2.9" transform="rotate(-3.8 1078.0 798.0)" fill="#1a72ee"/><linearGradient id="pg17" gradientUnits="userSpaceOnUse" x1="1052.5" y1="515.4" x2="1065.5" y2="514.6"><stop offset="0" stop-color="#fff" stop-opacity="0.06"/><stop offset="0.4" stop-color="#000" stop-opacity="0"/><stop offset="0.78" stop-color="#000" stop-opacity="0.3"/><stop offset="1" stop-color="#000" stop-opacity="0.225"/></linearGradient><path d="M1052.5 515.4L1065.5 514.6L1084.5 797.6A6.5 2.9 -3.8 0 1 1071.5 798.4z" fill="url(#pg17)"/><path d="M1053.4 528.9Q1060.1 531.7 1066.4 528.0" fill="none" stroke="#8a9a3a" stroke-width="0.7" opacity="0.75"/><path d="M1054.3 542.4Q1061.0 545.2 1067.3 541.5" fill="none" stroke="#8a9a3a" stroke-width="0.7" opacity="0.75"/><path d="M1055.2 555.8Q1061.9 558.7 1068.2 555.0" fill="none" stroke="#8a9a3a" stroke-width="0.7" opacity="0.75"/><path d="M1056.1 569.3Q1062.8 572.1 1069.1 568.4" fill="none" stroke="#8a9a3a" stroke-width="0.7" opacity="0.75"/><path d="M1057.0 582.8Q1063.7 585.6 1070.0 581.9" fill="none" stroke="#8a9a3a" stroke-width="0.7" opacity="0.75"/><path d="M1057.9 596.3Q1064.6 599.1 1070.9 595.4" fill="none" stroke="#8a9a3a" stroke-width="0.7" opacity="0.75"/><path d="M1058.8 609.7Q1065.5 612.5 1071.8 608.9" fill="none" stroke="#8a9a3a" stroke-width="0.7" opacity="0.75"/><path d="M1059.7 623.2Q1066.5 626.0 1072.7 622.3" fill="none" stroke="#8a9a3a" stroke-width="0.7" opacity="0.75"/><path d="M1060.7 636.7Q1067.4 639.5 1073.6 635.8" fill="none" stroke="#8a9a3a" stroke-width="0.7" opacity="0.75"/><path d="M1061.6 650.1Q1068.3 652.9 1074.5 649.3" fill="none" stroke="#8a9a3a" stroke-width="0.7" opacity="0.75"/><path d="M1062.5 663.6Q1069.2 666.4 1075.4 662.7" fill="none" stroke="#8a9a3a" stroke-width="0.7" opacity="0.75"/><path d="M1063.4 677.1Q1070.1 679.9 1076.3 676.2" fill="none" stroke="#8a9a3a" stroke-width="0.7" opacity="0.75"/><path d="M1064.3 690.5Q1071.0 693.3 1077.2 689.7" fill="none" stroke="#8a9a3a" stroke-width="0.7" opacity="0.75"/><path d="M1065.2 704.0Q1071.9 706.8 1078.1 703.1" fill="none" stroke="#8a9a3a" stroke-width="0.7" opacity="0.75"/><path d="M1066.1 717.5Q1072.8 720.3 1079.1 716.6" fill="none" stroke="#8a9a3a" stroke-width="0.7" opacity="0.75"/><path d="M1067.0 731.0Q1073.7 733.8 1080.0 730.1" fill="none" stroke="#8a9a3a" stroke-width="0.7" opacity="0.75"/><path d="M1067.9 744.4Q1074.6 747.2 1080.9 743.5" fill="none" stroke="#8a9a3a" stroke-width="0.7" opacity="0.75"/><path d="M1068.8 757.9Q1075.5 760.7 1081.8 757.0" fill="none" stroke="#8a9a3a" stroke-width="0.7" opacity="0.75"/><path d="M1069.7 771.4Q1076.4 774.2 1082.7 770.5" fill="none" stroke="#8a9a3a" stroke-width="0.7" opacity="0.75"/><path d="M1070.6 784.8Q1077.3 787.6 1083.6 784.0" fill="none" stroke="#8a9a3a" stroke-width="0.7" opacity="0.75"/><ellipse cx="1149.0" cy="489.0" rx="6.5" ry="2.9" transform="rotate(-2.1 1149.0 489.0)" fill="#22ee99"/><polygon points="1142.5,489.2 1155.5,488.8 1158.5,571.4 1145.5,571.8" fill="#22ee99" /><polygon points="1145.5,571.2 1158.5,570.8 1163.1,696.4 1150.1,696.8" fill="#00ffee" /><polygon points="1150.1,696.2 1163.1,695.8 1166.5,789.8 1153.5,790.2" fill="#1a72ee" /><ellipse cx="1160.0" cy="790.0" rx="6.5" ry="2.9" transform="rotate(-2.1 1160.0 790.0)" fill="#1a72ee"/><linearGradient id="pg18" gradientUnits="userSpaceOnUse" x1="1142.5" y1="489.2" x2="1155.5" y2="488.8"><stop offset="0" stop-color="#fff" stop-opacity="0.06"/><stop offset="0.4" stop-color="#000" stop-opacity="0"/><stop offset="0.78" stop-color="#000" stop-opacity="0.3"/><stop offset="1" stop-color="#000" stop-opacity="0.225"/></linearGradient><path d="M1142.5 489.2L1155.5 488.8L1166.5 789.8A6.5 2.9 -2.1 0 1 1153.5 790.2z" fill="url(#pg18)"/><path d="M1143.0 502.7Q1149.6 505.7 1156.0 502.3" fill="none" stroke="#8a9a3a" stroke-width="0.7" opacity="0.75"/><path d="M1143.5 516.2Q1150.1 519.2 1156.5 515.7" fill="none" stroke="#8a9a3a" stroke-width="0.7" opacity="0.75"/><path d="M1144.0 529.7Q1150.6 532.7 1157.0 529.2" fill="none" stroke="#8a9a3a" stroke-width="0.7" opacity="0.75"/><path d="M1144.5 543.2Q1151.1 546.2 1157.5 542.7" fill="none" stroke="#8a9a3a" stroke-width="0.7" opacity="0.75"/><path d="M1145.0 556.7Q1151.6 559.7 1158.0 556.2" fill="none" stroke="#8a9a3a" stroke-width="0.7" opacity="0.75"/><path d="M1145.5 570.2Q1152.1 573.2 1158.5 569.7" fill="none" stroke="#8a9a3a" stroke-width="0.7" opacity="0.75"/><path d="M1146.0 583.7Q1152.6 586.7 1158.9 583.2" fill="none" stroke="#8a9a3a" stroke-width="0.7" opacity="0.75"/><path d="M1146.4 597.2Q1153.1 600.2 1159.4 596.7" fill="none" stroke="#8a9a3a" stroke-width="0.7" opacity="0.75"/><path d="M1146.9 610.7Q1153.6 613.7 1159.9 610.2" fill="none" stroke="#8a9a3a" stroke-width="0.7" opacity="0.75"/><path d="M1147.4 624.1Q1154.0 627.2 1160.4 623.7" fill="none" stroke="#8a9a3a" stroke-width="0.7" opacity="0.75"/><path d="M1147.9 637.6Q1154.5 640.6 1160.9 637.2" fill="none" stroke="#8a9a3a" stroke-width="0.7" opacity="0.75"/><path d="M1148.4 651.1Q1155.0 654.1 1161.4 650.7" fill="none" stroke="#8a9a3a" stroke-width="0.7" opacity="0.75"/><path d="M1148.9 664.6Q1155.5 667.6 1161.9 664.1" fill="none" stroke="#8a9a3a" stroke-width="0.7" opacity="0.75"/><path d="M1149.4 678.1Q1156.0 681.1 1162.4 677.6" fill="none" stroke="#8a9a3a" stroke-width="0.7" opacity="0.75"/><path d="M1149.9 691.6Q1156.5 694.6 1162.9 691.1" fill="none" stroke="#8a9a3a" stroke-width="0.7" opacity="0.75"/><path d="M1150.4 705.1Q1157.0 708.1 1163.4 704.6" fill="none" stroke="#8a9a3a" stroke-width="0.7" opacity="0.75"/><path d="M1150.9 718.6Q1157.5 721.6 1163.9 718.1" fill="none" stroke="#8a9a3a" stroke-width="0.7" opacity="0.75"/><path d="M1151.4 732.1Q1158.0 735.1 1164.4 731.6" fill="none" stroke="#8a9a3a" stroke-width="0.7" opacity="0.75"/><path d="M1151.9 745.6Q1158.5 748.6 1164.9 745.1" fill="none" stroke="#8a9a3a" stroke-width="0.7" opacity="0.75"/><path d="M1152.4 759.1Q1159.0 762.1 1165.4 758.6" fill="none" stroke="#8a9a3a" stroke-width="0.7" opacity="0.75"/><path d="M1152.9 772.5Q1159.5 775.6 1165.8 772.1" fill="none" stroke="#8a9a3a" stroke-width="0.7" opacity="0.75"/><path d="M1153.4 786.0Q1160.0 789.0 1166.3 785.6" fill="none" stroke="#8a9a3a" stroke-width="0.7" opacity="0.75"/><ellipse cx="1018.0" cy="510.0" rx="7.0" ry="3.1" transform="rotate(-4.9 1018.0 510.0)" fill="#22ee99"/><polygon points="1011.0,510.6 1025.0,509.4 1034.9,625.0 1020.9,626.2" fill="#22ee99" /><polygon points="1020.9,625.6 1034.8,624.4 1044.4,736.0 1030.4,737.2" fill="#00ffee" /><polygon points="1030.4,736.6 1044.3,735.4 1052.0,824.4 1038.0,825.6" fill="#1a72ee" /><ellipse cx="1045.0" cy="825.0" rx="7.0" ry="3.1" transform="rotate(-4.9 1045.0 825.0)" fill="#1a72ee"/><linearGradient id="pg19" gradientUnits="userSpaceOnUse" x1="1011.0" y1="510.6" x2="1025.0" y2="509.4"><stop offset="0" stop-color="#fff" stop-opacity="0.06"/><stop offset="0.4" stop-color="#000" stop-opacity="0"/><stop offset="0.78" stop-color="#000" stop-opacity="0.3"/><stop offset="1" stop-color="#000" stop-opacity="0.225"/></linearGradient><path d="M1011.0 510.6L1025.0 509.4L1052.0 824.4A7.0 3.1 -4.9 0 1 1038.0 825.6z" fill="url(#pg19)"/><path d="M1012.2 524.0Q1019.5 526.9 1026.1 522.9" fill="none" stroke="#8a9a3a" stroke-width="0.7" opacity="0.75"/><path d="M1013.3 537.5Q1020.6 540.4 1027.3 536.3" fill="none" stroke="#8a9a3a" stroke-width="0.7" opacity="0.75"/><path d="M1014.5 550.9Q1021.8 553.8 1028.4 549.8" fill="none" stroke="#8a9a3a" stroke-width="0.7" opacity="0.75"/><path d="M1015.6 564.4Q1022.9 567.3 1029.6 563.2" fill="none" stroke="#8a9a3a" stroke-width="0.7" opacity="0.75"/><path d="M1016.8 577.9Q1024.1 580.7 1030.7 576.7" fill="none" stroke="#8a9a3a" stroke-width="0.7" opacity="0.75"/><path d="M1017.9 591.3Q1025.2 594.2 1031.9 590.1" fill="none" stroke="#8a9a3a" stroke-width="0.7" opacity="0.75"/><path d="M1019.1 604.8Q1026.4 607.6 1033.0 603.6" fill="none" stroke="#8a9a3a" stroke-width="0.7" opacity="0.75"/><path d="M1020.2 618.2Q1027.5 621.1 1034.2 617.0" fill="none" stroke="#8a9a3a" stroke-width="0.7" opacity="0.75"/><path d="M1021.4 631.7Q1028.7 634.5 1035.4 630.5" fill="none" stroke="#8a9a3a" stroke-width="0.7" opacity="0.75"/><path d="M1022.6 645.1Q1029.8 648.0 1036.5 643.9" fill="none" stroke="#8a9a3a" stroke-width="0.7" opacity="0.75"/><path d="M1023.7 658.6Q1031.0 661.4 1037.7 657.4" fill="none" stroke="#8a9a3a" stroke-width="0.7" opacity="0.75"/><path d="M1024.9 672.0Q1032.1 674.9 1038.8 670.8" fill="none" stroke="#8a9a3a" stroke-width="0.7" opacity="0.75"/><path d="M1026.0 685.5Q1033.3 688.3 1040.0 684.3" fill="none" stroke="#8a9a3a" stroke-width="0.7" opacity="0.75"/><path d="M1027.2 698.9Q1034.4 701.8 1041.1 697.7" fill="none" stroke="#8a9a3a" stroke-width="0.7" opacity="0.75"/><path d="M1028.3 712.4Q1035.6 715.2 1042.3 711.2" fill="none" stroke="#8a9a3a" stroke-width="0.7" opacity="0.75"/><path d="M1029.5 725.8Q1036.7 728.7 1043.4 724.6" fill="none" stroke="#8a9a3a" stroke-width="0.7" opacity="0.75"/><path d="M1030.6 739.3Q1037.9 742.1 1044.6 738.1" fill="none" stroke="#8a9a3a" stroke-width="0.7" opacity="0.75"/><path d="M1031.8 752.7Q1039.1 755.6 1045.7 751.5" fill="none" stroke="#8a9a3a" stroke-width="0.7" opacity="0.75"/><path d="M1032.9 766.2Q1040.2 769.1 1046.9 765.0" fill="none" stroke="#8a9a3a" stroke-width="0.7" opacity="0.75"/><path d="M1034.1 779.6Q1041.4 782.5 1048.0 778.4" fill="none" stroke="#8a9a3a" stroke-width="0.7" opacity="0.75"/><path d="M1035.2 793.1Q1042.5 796.0 1049.2 791.9" fill="none" stroke="#8a9a3a" stroke-width="0.7" opacity="0.75"/><path d="M1036.4 806.5Q1043.7 809.4 1050.3 805.3" fill="none" stroke="#8a9a3a" stroke-width="0.7" opacity="0.75"/><path d="M1037.5 820.0Q1044.8 822.9 1051.5 818.8" fill="none" stroke="#8a9a3a" stroke-width="0.7" opacity="0.75"/><ellipse cx="1116.0" cy="510.0" rx="7.0" ry="3.1" transform="rotate(-3.0 1116.0 510.0)" fill="#33ee00"/><polygon points="1109.0,510.4 1123.0,509.6 1126.8,583.2 1112.8,584.0" fill="#33ee00" /><polygon points="1112.8,583.4 1126.8,582.6 1130.8,660.2 1116.8,661.0" fill="#22ee99" /><polygon points="1116.8,660.4 1130.8,659.6 1135.6,752.2 1121.6,753.0" fill="#00ffee" /><polygon points="1121.5,752.4 1135.5,751.6 1139.0,818.6 1125.0,819.4" fill="#1a72ee" /><ellipse cx="1132.0" cy="819.0" rx="7.0" ry="3.1" transform="rotate(-3.0 1132.0 819.0)" fill="#1a72ee"/><linearGradient id="pg20" gradientUnits="userSpaceOnUse" x1="1109.0" y1="510.4" x2="1123.0" y2="509.6"><stop offset="0" stop-color="#fff" stop-opacity="0.06"/><stop offset="0.4" stop-color="#000" stop-opacity="0"/><stop offset="0.78" stop-color="#000" stop-opacity="0.3"/><stop offset="1" stop-color="#000" stop-opacity="0.225"/></linearGradient><path d="M1109.0 510.4L1123.0 509.6L1139.0 818.6A7.0 3.1 -3.0 0 1 1125.0 819.4z" fill="url(#pg20)"/><path d="M1109.7 523.8Q1116.9 527.0 1123.7 523.1" fill="none" stroke="#8a9a3a" stroke-width="0.7" opacity="0.75"/><path d="M1110.4 537.3Q1117.6 540.5 1124.4 536.6" fill="none" stroke="#8a9a3a" stroke-width="0.7" opacity="0.75"/><path d="M1111.1 550.8Q1118.3 553.9 1125.1 550.1" fill="none" stroke="#8a9a3a" stroke-width="0.7" opacity="0.75"/><path d="M1111.8 564.3Q1119.0 567.4 1125.8 563.6" fill="none" stroke="#8a9a3a" stroke-width="0.7" opacity="0.75"/><path d="M1112.5 577.8Q1119.7 580.9 1126.5 577.0" fill="none" stroke="#8a9a3a" stroke-width="0.7" opacity="0.75"/><path d="M1113.2 591.3Q1120.4 594.4 1127.2 590.5" fill="none" stroke="#8a9a3a" stroke-width="0.7" opacity="0.75"/><path d="M1113.9 604.7Q1121.1 607.9 1127.9 604.0" fill="none" stroke="#8a9a3a" stroke-width="0.7" opacity="0.75"/><path d="M1114.6 618.2Q1121.8 621.4 1128.6 617.5" fill="none" stroke="#8a9a3a" stroke-width="0.7" opacity="0.75"/><path d="M1115.3 631.7Q1122.5 634.8 1129.3 631.0" fill="none" stroke="#8a9a3a" stroke-width="0.7" opacity="0.75"/><path d="M1116.0 645.2Q1123.2 648.3 1130.0 644.5" fill="none" stroke="#8a9a3a" stroke-width="0.7" opacity="0.75"/><path d="M1116.7 658.7Q1123.9 661.8 1130.7 657.9" fill="none" stroke="#8a9a3a" stroke-width="0.7" opacity="0.75"/><path d="M1117.4 672.1Q1124.6 675.3 1131.4 671.4" fill="none" stroke="#8a9a3a" stroke-width="0.7" opacity="0.75"/><path d="M1118.1 685.6Q1125.3 688.8 1132.1 684.9" fill="none" stroke="#8a9a3a" stroke-width="0.7" opacity="0.75"/><path d="M1118.8 699.1Q1126.0 702.2 1132.8 698.4" fill="none" stroke="#8a9a3a" stroke-width="0.7" opacity="0.75"/><path d="M1119.5 712.6Q1126.7 715.7 1133.5 711.9" fill="none" stroke="#8a9a3a" stroke-width="0.7" opacity="0.75"/><path d="M1120.2 726.1Q1127.4 729.2 1134.2 725.3" fill="none" stroke="#8a9a3a" stroke-width="0.7" opacity="0.75"/><path d="M1120.9 739.6Q1128.0 742.7 1134.9 738.8" fill="none" stroke="#8a9a3a" stroke-width="0.7" opacity="0.75"/><path d="M1121.6 753.0Q1128.7 756.2 1135.6 752.3" fill="none" stroke="#8a9a3a" stroke-width="0.7" opacity="0.75"/><path d="M1122.3 766.5Q1129.4 769.7 1136.3 765.8" fill="none" stroke="#8a9a3a" stroke-width="0.7" opacity="0.75"/><path d="M1123.0 780.0Q1130.1 783.1 1137.0 779.3" fill="none" stroke="#8a9a3a" stroke-width="0.7" opacity="0.75"/><path d="M1123.7 793.5Q1130.8 796.6 1137.7 792.8" fill="none" stroke="#8a9a3a" stroke-width="0.7" opacity="0.75"/><path d="M1124.4 807.0Q1131.5 810.1 1138.3 806.2" fill="none" stroke="#8a9a3a" stroke-width="0.7" opacity="0.75"/><ellipse cx="1049.0" cy="518.0" rx="7.0" ry="3.1" transform="rotate(-4.1 1049.0 518.0)" fill="#33ee00"/><polygon points="1042.0,518.5 1056.0,517.5 1057.4,537.1 1043.4,538.1" fill="#33ee00" /><polygon points="1043.4,537.5 1057.3,536.5 1065.9,656.1 1052.0,657.1" fill="#22ee99" /><polygon points="1051.9,656.5 1065.9,655.5 1073.1,756.1 1059.2,757.1" fill="#00ffee" /><polygon points="1059.1,756.5 1073.1,755.5 1079.0,837.5 1065.0,838.5" fill="#1a72ee" /><ellipse cx="1072.0" cy="838.0" rx="7.0" ry="3.1" transform="rotate(-4.1 1072.0 838.0)" fill="#1a72ee"/><linearGradient id="pg21" gradientUnits="userSpaceOnUse" x1="1042.0" y1="518.5" x2="1056.0" y2="517.5"><stop offset="0" stop-color="#fff" stop-opacity="0.06"/><stop offset="0.4" stop-color="#000" stop-opacity="0"/><stop offset="0.78" stop-color="#000" stop-opacity="0.3"/><stop offset="1" stop-color="#000" stop-opacity="0.225"/></linearGradient><path d="M1042.0 518.5L1056.0 517.5L1079.0 837.5A7.0 3.1 -4.1 0 1 1065.0 838.5z" fill="url(#pg21)"/><path d="M1043.0 532.0Q1050.2 535.0 1056.9 531.0" fill="none" stroke="#8a9a3a" stroke-width="0.7" opacity="0.75"/><path d="M1044.0 545.4Q1051.2 548.4 1057.9 544.4" fill="none" stroke="#8a9a3a" stroke-width="0.7" opacity="0.75"/><path d="M1044.9 558.9Q1052.2 561.9 1058.9 557.9" fill="none" stroke="#8a9a3a" stroke-width="0.7" opacity="0.75"/><path d="M1045.9 572.4Q1053.1 575.4 1059.9 571.4" fill="none" stroke="#8a9a3a" stroke-width="0.7" opacity="0.75"/><path d="M1046.9 585.8Q1054.1 588.8 1060.8 584.8" fill="none" stroke="#8a9a3a" stroke-width="0.7" opacity="0.75"/><path d="M1047.8 599.3Q1055.1 602.3 1061.8 598.3" fill="none" stroke="#8a9a3a" stroke-width="0.7" opacity="0.75"/><path d="M1048.8 612.8Q1056.0 615.7 1062.8 611.8" fill="none" stroke="#8a9a3a" stroke-width="0.7" opacity="0.75"/><path d="M1049.8 626.2Q1057.0 629.2 1063.7 625.2" fill="none" stroke="#8a9a3a" stroke-width="0.7" opacity="0.75"/><path d="M1050.7 639.7Q1058.0 642.7 1064.7 638.7" fill="none" stroke="#8a9a3a" stroke-width="0.7" opacity="0.75"/><path d="M1051.7 653.2Q1058.9 656.1 1065.7 652.2" fill="none" stroke="#8a9a3a" stroke-width="0.7" opacity="0.75"/><path d="M1052.7 666.6Q1059.9 669.6 1066.6 665.6" fill="none" stroke="#8a9a3a" stroke-width="0.7" opacity="0.75"/><path d="M1053.6 680.1Q1060.9 683.1 1067.6 679.1" fill="none" stroke="#8a9a3a" stroke-width="0.7" opacity="0.75"/><path d="M1054.6 693.6Q1061.8 696.5 1068.6 692.5" fill="none" stroke="#8a9a3a" stroke-width="0.7" opacity="0.75"/><path d="M1055.6 707.0Q1062.8 710.0 1069.5 706.0" fill="none" stroke="#8a9a3a" stroke-width="0.7" opacity="0.75"/><path d="M1056.5 720.5Q1063.8 723.5 1070.5 719.5" fill="none" stroke="#8a9a3a" stroke-width="0.7" opacity="0.75"/><path d="M1057.5 733.9Q1064.7 736.9 1071.5 732.9" fill="none" stroke="#8a9a3a" stroke-width="0.7" opacity="0.75"/><path d="M1058.5 747.4Q1065.7 750.4 1072.4 746.4" fill="none" stroke="#8a9a3a" stroke-width="0.7" opacity="0.75"/><path d="M1059.4 760.9Q1066.7 763.9 1073.4 759.9" fill="none" stroke="#8a9a3a" stroke-width="0.7" opacity="0.75"/><path d="M1060.4 774.3Q1067.6 777.3 1074.4 773.3" fill="none" stroke="#8a9a3a" stroke-width="0.7" opacity="0.75"/><path d="M1061.4 787.8Q1068.6 790.8 1075.3 786.8" fill="none" stroke="#8a9a3a" stroke-width="0.7" opacity="0.75"/><path d="M1062.3 801.3Q1069.6 804.3 1076.3 800.3" fill="none" stroke="#8a9a3a" stroke-width="0.7" opacity="0.75"/><path d="M1063.3 814.7Q1070.5 817.7 1077.3 813.7" fill="none" stroke="#8a9a3a" stroke-width="0.7" opacity="0.75"/><path d="M1064.3 828.2Q1071.5 831.2 1078.2 827.2" fill="none" stroke="#8a9a3a" stroke-width="0.7" opacity="0.75"/><ellipse cx="1078.0" cy="521.0" rx="7.0" ry="3.1" transform="rotate(-4.0 1078.0 521.0)" fill="#22ee99"/><polygon points="1071.0,521.5 1085.0,520.5 1094.2,652.1 1080.2,653.1" fill="#22ee99" /><polygon points="1080.2,652.5 1094.1,651.5 1101.7,759.1 1087.7,760.1" fill="#00ffee" /><polygon points="1087.7,759.5 1101.6,758.5 1108.0,849.5 1094.0,850.5" fill="#1a72ee" /><ellipse cx="1101.0" cy="850.0" rx="7.0" ry="3.1" transform="rotate(-4.0 1101.0 850.0)" fill="#1a72ee"/><linearGradient id="pg22" gradientUnits="userSpaceOnUse" x1="1071.0" y1="521.5" x2="1085.0" y2="520.5"><stop offset="0" stop-color="#fff" stop-opacity="0.06"/><stop offset="0.4" stop-color="#000" stop-opacity="0"/><stop offset="0.78" stop-color="#000" stop-opacity="0.3"/><stop offset="1" stop-color="#000" stop-opacity="0.225"/></linearGradient><path d="M1071.0 521.5L1085.0 520.5L1108.0 849.5A7.0 3.1 -4.0 0 1 1094.0 850.5z" fill="url(#pg22)"/><path d="M1072.0 535.0Q1079.2 538.0 1085.9 534.0" fill="none" stroke="#8a9a3a" stroke-width="0.7" opacity="0.75"/><path d="M1072.9 548.4Q1080.1 551.4 1086.9 547.4" fill="none" stroke="#8a9a3a" stroke-width="0.7" opacity="0.75"/><path d="M1073.8 561.9Q1081.1 564.9 1087.8 560.9" fill="none" stroke="#8a9a3a" stroke-width="0.7" opacity="0.75"/><path d="M1074.8 575.4Q1082.0 578.4 1088.7 574.4" fill="none" stroke="#8a9a3a" stroke-width="0.7" opacity="0.75"/><path d="M1075.7 588.8Q1083.0 591.8 1089.7 587.8" fill="none" stroke="#8a9a3a" stroke-width="0.7" opacity="0.75"/><path d="M1076.7 602.3Q1083.9 605.3 1090.6 601.3" fill="none" stroke="#8a9a3a" stroke-width="0.7" opacity="0.75"/><path d="M1077.6 615.8Q1084.8 618.8 1091.6 614.8" fill="none" stroke="#8a9a3a" stroke-width="0.7" opacity="0.75"/><path d="M1078.5 629.2Q1085.8 632.2 1092.5 628.2" fill="none" stroke="#8a9a3a" stroke-width="0.7" opacity="0.75"/><path d="M1079.5 642.7Q1086.7 645.7 1093.5 641.7" fill="none" stroke="#8a9a3a" stroke-width="0.7" opacity="0.75"/><path d="M1080.4 656.2Q1087.7 659.2 1094.4 655.2" fill="none" stroke="#8a9a3a" stroke-width="0.7" opacity="0.75"/><path d="M1081.4 669.6Q1088.6 672.6 1095.3 668.7" fill="none" stroke="#8a9a3a" stroke-width="0.7" opacity="0.75"/><path d="M1082.3 683.1Q1089.5 686.1 1096.3 682.1" fill="none" stroke="#8a9a3a" stroke-width="0.7" opacity="0.75"/><path d="M1083.3 696.6Q1090.5 699.6 1097.2 695.6" fill="none" stroke="#8a9a3a" stroke-width="0.7" opacity="0.75"/><path d="M1084.2 710.0Q1091.4 713.0 1098.2 709.1" fill="none" stroke="#8a9a3a" stroke-width="0.7" opacity="0.75"/><path d="M1085.1 723.5Q1092.4 726.5 1099.1 722.5" fill="none" stroke="#8a9a3a" stroke-width="0.7" opacity="0.75"/><path d="M1086.1 737.0Q1093.3 740.0 1100.0 736.0" fill="none" stroke="#8a9a3a" stroke-width="0.7" opacity="0.75"/><path d="M1087.0 750.4Q1094.2 753.4 1101.0 749.5" fill="none" stroke="#8a9a3a" stroke-width="0.7" opacity="0.75"/><path d="M1088.0 763.9Q1095.2 766.9 1101.9 762.9" fill="none" stroke="#8a9a3a" stroke-width="0.7" opacity="0.75"/><path d="M1088.9 777.4Q1096.1 780.4 1102.9 776.4" fill="none" stroke="#8a9a3a" stroke-width="0.7" opacity="0.75"/><path d="M1089.8 790.8Q1097.1 793.8 1103.8 789.9" fill="none" stroke="#8a9a3a" stroke-width="0.7" opacity="0.75"/><path d="M1090.8 804.3Q1098.0 807.3 1104.8 803.3" fill="none" stroke="#8a9a3a" stroke-width="0.7" opacity="0.75"/><path d="M1091.7 817.8Q1099.0 820.8 1105.7 816.8" fill="none" stroke="#8a9a3a" stroke-width="0.7" opacity="0.75"/><path d="M1092.7 831.2Q1099.9 834.2 1106.6 830.3" fill="none" stroke="#8a9a3a" stroke-width="0.7" opacity="0.75"/><path d="M1093.6 844.7Q1100.8 847.7 1107.6 843.7" fill="none" stroke="#8a9a3a" stroke-width="0.7" opacity="0.75"/><polygon points="1004.0,504.0 1038.7,494.0 1051.0,487.6 1111.7,472.6 1160.0,481.0 1097.0,519.0" fill="#33ffaa" /><polygon points="1004.0,504.0 1038.7,494.0 1051.0,487.6 1085.0,480.0 1120.0,486.0 1138.0,494.0 1097.0,519.0" fill="#33ff00" /><polygon points="1004.0,504.0 1097.0,519.0 1097.0,522.0 1004.0,507.0" fill="#22cc66" /><polygon points="1097.0,519.0 1160.0,481.0 1160.0,484.0 1097.0,522.0" fill="#22cc88" /><path d="M1030 497L1135 476M1050 510L1150 484M1060 488L1100 500L1125 478" stroke="#7a9a40" stroke-width="0.5" opacity="0.6" fill="none"/><polygon points="1080.0,340.0 1099.5,336.0 1111.7,488.5 1093.0,490.0" fill="#55ee00" /><polygon points="1089.0,338.0 1099.5,336.0 1111.7,488.5 1102.0,489.5" fill="#3cc000" /><polygon points="1094.0,337.0 1099.5,336.0 1111.7,488.5 1106.0,489.0" fill="#2a9a00" /><polygon points="1042.4,351.8 1070.5,346.0 1075.0,388.0 1048.0,390.0" fill="#ccff00" /><polygon points="1048.0,390.0 1075.0,388.0 1083.6,497.0 1055.5,488.5" fill="#55ff00" /><polygon points="1070.5,346.0 1080.0,344.0 1093.0,498.0 1083.6,497.0" fill="#44cc00" /><polygon points="1070.5,346.0 1080.0,344.0 1080.5,388.0 1075.0,388.0" fill="#99cc00" /><polygon points="1075.5,346.0 1080.0,344.0 1093.0,498.0 1088.0,497.5" fill="#2aa000" /><path d="M1045 432L1078 436M1050 470L1082 474M1070 530M1085 398L1098 396M1088 435L1104 432" stroke="#7a9a20" stroke-width="0.5" opacity="0.6" fill="none"/><ellipse cx="525.0" cy="627.0" rx="14.5" ry="6.5" transform="rotate(-14.0 525.0 627.0)" fill="#00ffee"/><polygon points="510.9,630.5 539.1,623.5 550.0,667.1 521.8,674.1" fill="#00ffee" /><polygon points="521.7,673.5 549.8,666.5 626.9,974.5 598.7,981.5" fill="#1a72ee" /><ellipse cx="612.8" cy="978.0" rx="14.5" ry="6.5" transform="rotate(-14.0 612.8 978.0)" fill="#1a72ee"/><linearGradient id="pg23" gradientUnits="userSpaceOnUse" x1="510.9" y1="630.5" x2="539.1" y2="623.5"><stop offset="0" stop-color="#fff" stop-opacity="0.06"/><stop offset="0.4" stop-color="#000" stop-opacity="0"/><stop offset="0.78" stop-color="#000" stop-opacity="0.3"/><stop offset="1" stop-color="#000" stop-opacity="0.225"/></linearGradient><path d="M510.9 630.5L539.1 623.5L626.9 974.5A14.5 6.5 -14.0 0 1 598.7 981.5z" fill="url(#pg23)"/><path d="M515.1 647.0Q530.9 650.5 543.2 640.0" fill="none" stroke="#8a9a3a" stroke-width="0.7" opacity="0.75"/><path d="M519.2 663.5Q535.0 667.0 547.3 656.5" fill="none" stroke="#8a9a3a" stroke-width="0.7" opacity="0.75"/><path d="M523.3 680.0Q539.1 683.5 551.4 673.0" fill="none" stroke="#8a9a3a" stroke-width="0.7" opacity="0.75"/><path d="M527.4 696.5Q543.3 700.0 555.6 689.4" fill="none" stroke="#8a9a3a" stroke-width="0.7" opacity="0.75"/><path d="M531.6 713.0Q547.4 716.5 559.7 705.9" fill="none" stroke="#8a9a3a" stroke-width="0.7" opacity="0.75"/><path d="M535.7 729.5Q551.5 733.0 563.8 722.4" fill="none" stroke="#8a9a3a" stroke-width="0.7" opacity="0.75"/><path d="M539.8 746.0Q555.6 749.5 567.9 738.9" fill="none" stroke="#8a9a3a" stroke-width="0.7" opacity="0.75"/><path d="M543.9 762.5Q559.8 766.0 572.1 755.4" fill="none" stroke="#8a9a3a" stroke-width="0.7" opacity="0.75"/><path d="M548.1 778.9Q563.9 782.5 576.2 771.9" fill="none" stroke="#8a9a3a" stroke-width="0.7" opacity="0.75"/><path d="M552.2 795.4Q568.0 799.0 580.3 788.4" fill="none" stroke="#8a9a3a" stroke-width="0.7" opacity="0.75"/><path d="M556.3 811.9Q572.1 815.4 584.4 804.9" fill="none" stroke="#8a9a3a" stroke-width="0.7" opacity="0.75"/><path d="M560.4 828.4Q576.3 831.9 588.6 821.4" fill="none" stroke="#8a9a3a" stroke-width="0.7" opacity="0.75"/><path d="M564.6 844.9Q580.4 848.4 592.7 837.9" fill="none" stroke="#8a9a3a" stroke-width="0.7" opacity="0.75"/><path d="M568.7 861.4Q584.5 864.9 596.8 854.4" fill="none" stroke="#8a9a3a" stroke-width="0.7" opacity="0.75"/><path d="M572.8 877.9Q588.6 881.4 600.9 870.9" fill="none" stroke="#8a9a3a" stroke-width="0.7" opacity="0.75"/><path d="M576.9 894.4Q592.8 897.9 605.1 887.4" fill="none" stroke="#8a9a3a" stroke-width="0.7" opacity="0.75"/><path d="M581.1 910.9Q596.9 914.4 609.2 903.8" fill="none" stroke="#8a9a3a" stroke-width="0.7" opacity="0.75"/><path d="M585.2 927.4Q601.0 930.9 613.3 920.3" fill="none" stroke="#8a9a3a" stroke-width="0.7" opacity="0.75"/><path d="M589.3 943.9Q605.1 947.4 617.4 936.8" fill="none" stroke="#8a9a3a" stroke-width="0.7" opacity="0.75"/><path d="M593.4 960.4Q609.3 963.9 621.6 953.3" fill="none" stroke="#8a9a3a" stroke-width="0.7" opacity="0.75"/><path d="M597.6 976.8Q613.4 980.4 625.7 969.8" fill="none" stroke="#8a9a3a" stroke-width="0.7" opacity="0.75"/><ellipse cx="604.0" cy="619.0" rx="13.0" ry="5.9" transform="rotate(-11.9 604.0 619.0)" fill="#00ffee"/><polygon points="591.3,621.7 616.7,616.3 648.5,766.9 623.1,772.3" fill="#00ffee" /><polygon points="623.0,771.7 648.4,766.3 683.7,933.3 658.3,938.7" fill="#1a72ee" /><ellipse cx="671.0" cy="936.0" rx="13.0" ry="5.9" transform="rotate(-11.9 671.0 936.0)" fill="#1a72ee"/><linearGradient id="pg24" gradientUnits="userSpaceOnUse" x1="591.3" y1="621.7" x2="616.7" y2="616.3"><stop offset="0" stop-color="#fff" stop-opacity="0.06"/><stop offset="0.4" stop-color="#000" stop-opacity="0"/><stop offset="0.78" stop-color="#000" stop-opacity="0.3"/><stop offset="1" stop-color="#000" stop-opacity="0.225"/></linearGradient><path d="M591.3 621.7L616.7 616.3L683.7 933.3A13.0 5.9 -11.9 0 1 658.3 938.7z" fill="url(#pg24)"/><path d="M594.8 638.3Q608.9 642.0 620.2 632.9" fill="none" stroke="#8a9a3a" stroke-width="0.7" opacity="0.75"/><path d="M598.3 655.0Q612.4 658.6 623.7 649.6" fill="none" stroke="#8a9a3a" stroke-width="0.7" opacity="0.75"/><path d="M601.8 671.6Q615.9 675.3 627.3 666.2" fill="none" stroke="#8a9a3a" stroke-width="0.7" opacity="0.75"/><path d="M605.3 688.2Q619.4 691.9 630.8 682.8" fill="none" stroke="#8a9a3a" stroke-width="0.7" opacity="0.75"/><path d="M608.9 704.9Q622.9 708.5 634.3 699.5" fill="none" stroke="#8a9a3a" stroke-width="0.7" opacity="0.75"/><path d="M612.4 721.5Q626.4 725.2 637.8 716.1" fill="none" stroke="#8a9a3a" stroke-width="0.7" opacity="0.75"/><path d="M615.9 738.1Q630.0 741.8 641.3 732.7" fill="none" stroke="#8a9a3a" stroke-width="0.7" opacity="0.75"/><path d="M619.4 754.7Q633.5 758.4 644.8 749.4" fill="none" stroke="#8a9a3a" stroke-width="0.7" opacity="0.75"/><path d="M622.9 771.4Q637.0 775.1 648.4 766.0" fill="none" stroke="#8a9a3a" stroke-width="0.7" opacity="0.75"/><path d="M626.4 788.0Q640.5 791.7 651.9 782.6" fill="none" stroke="#8a9a3a" stroke-width="0.7" opacity="0.75"/><path d="M630.0 804.6Q644.0 808.3 655.4 799.3" fill="none" stroke="#8a9a3a" stroke-width="0.7" opacity="0.75"/><path d="M633.5 821.3Q647.5 825.0 658.9 815.9" fill="none" stroke="#8a9a3a" stroke-width="0.7" opacity="0.75"/><path d="M637.0 837.9Q651.0 841.6 662.4 832.5" fill="none" stroke="#8a9a3a" stroke-width="0.7" opacity="0.75"/><path d="M640.5 854.5Q654.6 858.2 665.9 849.2" fill="none" stroke="#8a9a3a" stroke-width="0.7" opacity="0.75"/><path d="M644.0 871.2Q658.1 874.8 669.4 865.8" fill="none" stroke="#8a9a3a" stroke-width="0.7" opacity="0.75"/><path d="M647.5 887.8Q661.6 891.5 673.0 882.4" fill="none" stroke="#8a9a3a" stroke-width="0.7" opacity="0.75"/><path d="M651.0 904.4Q665.1 908.1 676.5 899.1" fill="none" stroke="#8a9a3a" stroke-width="0.7" opacity="0.75"/><path d="M654.6 921.1Q668.6 924.7 680.0 915.7" fill="none" stroke="#8a9a3a" stroke-width="0.7" opacity="0.75"/><ellipse cx="671.0" cy="596.0" rx="12.5" ry="5.6" transform="rotate(-10.1 671.0 596.0)" fill="#00ffee"/><polygon points="658.7,598.2 683.3,593.8 705.6,718.4 681.0,722.8" fill="#00ffee" /><polygon points="680.9,722.2 705.5,717.8 737.3,895.8 712.7,900.2" fill="#1a72ee" /><ellipse cx="725.0" cy="898.0" rx="12.5" ry="5.6" transform="rotate(-10.1 725.0 898.0)" fill="#1a72ee"/><linearGradient id="pg25" gradientUnits="userSpaceOnUse" x1="658.7" y1="598.2" x2="683.3" y2="593.8"><stop offset="0" stop-color="#fff" stop-opacity="0.06"/><stop offset="0.4" stop-color="#000" stop-opacity="0"/><stop offset="0.78" stop-color="#000" stop-opacity="0.3"/><stop offset="1" stop-color="#000" stop-opacity="0.225"/></linearGradient><path d="M658.7 598.2L683.3 593.8L737.3 895.8A12.5 5.6 -10.1 0 1 712.7 900.2z" fill="url(#pg25)"/><path d="M661.7 614.9Q675.1 618.9 686.3 610.5" fill="none" stroke="#8a9a3a" stroke-width="0.7" opacity="0.75"/><path d="M664.7 631.7Q678.1 635.6 689.3 627.3" fill="none" stroke="#8a9a3a" stroke-width="0.7" opacity="0.75"/><path d="M667.7 648.4Q681.1 652.4 692.3 644.0" fill="none" stroke="#8a9a3a" stroke-width="0.7" opacity="0.75"/><path d="M670.7 665.1Q684.1 669.1 695.3 660.7" fill="none" stroke="#8a9a3a" stroke-width="0.7" opacity="0.75"/><path d="M673.7 681.9Q687.1 685.8 698.3 677.5" fill="none" stroke="#8a9a3a" stroke-width="0.7" opacity="0.75"/><path d="M676.6 698.6Q690.1 702.6 701.3 694.2" fill="none" stroke="#8a9a3a" stroke-width="0.7" opacity="0.75"/><path d="M679.6 715.3Q693.0 719.3 704.3 710.9" fill="none" stroke="#8a9a3a" stroke-width="0.7" opacity="0.75"/><path d="M682.6 732.1Q696.0 736.0 707.2 727.7" fill="none" stroke="#8a9a3a" stroke-width="0.7" opacity="0.75"/><path d="M685.6 748.8Q699.0 752.8 710.2 744.4" fill="none" stroke="#8a9a3a" stroke-width="0.7" opacity="0.75"/><path d="M688.6 765.5Q702.0 769.5 713.2 761.1" fill="none" stroke="#8a9a3a" stroke-width="0.7" opacity="0.75"/><path d="M691.6 782.3Q705.0 786.2 716.2 777.9" fill="none" stroke="#8a9a3a" stroke-width="0.7" opacity="0.75"/><path d="M694.6 799.0Q708.0 803.0 719.2 794.6" fill="none" stroke="#8a9a3a" stroke-width="0.7" opacity="0.75"/><path d="M697.6 815.7Q711.0 819.7 722.2 811.3" fill="none" stroke="#8a9a3a" stroke-width="0.7" opacity="0.75"/><path d="M700.6 832.5Q714.0 836.4 725.2 828.1" fill="none" stroke="#8a9a3a" stroke-width="0.7" opacity="0.75"/><path d="M703.6 849.2Q717.0 853.2 728.2 844.8" fill="none" stroke="#8a9a3a" stroke-width="0.7" opacity="0.75"/><path d="M706.6 866.0Q720.0 869.9 731.2 861.6" fill="none" stroke="#8a9a3a" stroke-width="0.7" opacity="0.75"/><path d="M709.6 882.7Q723.0 886.6 734.2 878.3" fill="none" stroke="#8a9a3a" stroke-width="0.7" opacity="0.75"/><ellipse cx="559.0" cy="634.0" rx="14.5" ry="6.5" transform="rotate(-12.7 559.0 634.0)" fill="#00ffee"/><polygon points="544.9,637.2 573.1,630.8 586.6,690.4 558.3,696.8" fill="#00ffee" /><polygon points="558.2,696.2 586.5,689.8 656.1,997.8 627.9,1004.2" fill="#1a72ee" /><ellipse cx="642.0" cy="1001.0" rx="14.5" ry="6.5" transform="rotate(-12.7 642.0 1001.0)" fill="#1a72ee"/><linearGradient id="pg26" gradientUnits="userSpaceOnUse" x1="544.9" y1="637.2" x2="573.1" y2="630.8"><stop offset="0" stop-color="#fff" stop-opacity="0.06"/><stop offset="0.4" stop-color="#000" stop-opacity="0"/><stop offset="0.78" stop-color="#000" stop-opacity="0.3"/><stop offset="1" stop-color="#000" stop-opacity="0.225"/></linearGradient><path d="M544.9 637.2L573.1 630.8L656.1 997.8A14.5 6.5 -12.7 0 1 627.9 1004.2z" fill="url(#pg26)"/><path d="M548.6 653.8Q564.3 657.7 576.9 647.4" fill="none" stroke="#8a9a3a" stroke-width="0.7" opacity="0.75"/><path d="M552.4 670.4Q568.1 674.2 580.6 664.0" fill="none" stroke="#8a9a3a" stroke-width="0.7" opacity="0.75"/><path d="M556.1 686.9Q571.8 690.8 584.4 680.5" fill="none" stroke="#8a9a3a" stroke-width="0.7" opacity="0.75"/><path d="M559.9 703.5Q575.6 707.4 588.1 697.1" fill="none" stroke="#8a9a3a" stroke-width="0.7" opacity="0.75"/><path d="M563.6 720.1Q579.3 724.0 591.9 713.7" fill="none" stroke="#8a9a3a" stroke-width="0.7" opacity="0.75"/><path d="M567.4 736.7Q583.1 740.6 595.6 730.3" fill="none" stroke="#8a9a3a" stroke-width="0.7" opacity="0.75"/><path d="M571.1 753.3Q586.8 757.1 599.4 746.9" fill="none" stroke="#8a9a3a" stroke-width="0.7" opacity="0.75"/><path d="M574.9 769.8Q590.6 773.7 603.1 763.5" fill="none" stroke="#8a9a3a" stroke-width="0.7" opacity="0.75"/><path d="M578.6 786.4Q594.3 790.3 606.9 780.0" fill="none" stroke="#8a9a3a" stroke-width="0.7" opacity="0.75"/><path d="M582.4 803.0Q598.1 806.9 610.6 796.6" fill="none" stroke="#8a9a3a" stroke-width="0.7" opacity="0.75"/><path d="M586.1 819.6Q601.8 823.5 614.4 813.2" fill="none" stroke="#8a9a3a" stroke-width="0.7" opacity="0.75"/><path d="M589.9 836.2Q605.6 840.0 618.1 829.8" fill="none" stroke="#8a9a3a" stroke-width="0.7" opacity="0.75"/><path d="M593.6 852.8Q609.3 856.6 621.9 846.4" fill="none" stroke="#8a9a3a" stroke-width="0.7" opacity="0.75"/><path d="M597.4 869.3Q613.1 873.2 625.6 862.9" fill="none" stroke="#8a9a3a" stroke-width="0.7" opacity="0.75"/><path d="M601.1 885.9Q616.8 889.8 629.4 879.5" fill="none" stroke="#8a9a3a" stroke-width="0.7" opacity="0.75"/><path d="M604.9 902.5Q620.6 906.4 633.1 896.1" fill="none" stroke="#8a9a3a" stroke-width="0.7" opacity="0.75"/><path d="M608.6 919.1Q624.3 923.0 636.9 912.7" fill="none" stroke="#8a9a3a" stroke-width="0.7" opacity="0.75"/><path d="M612.4 935.7Q628.1 939.5 640.6 929.3" fill="none" stroke="#8a9a3a" stroke-width="0.7" opacity="0.75"/><path d="M616.1 952.2Q631.8 956.1 644.4 945.8" fill="none" stroke="#8a9a3a" stroke-width="0.7" opacity="0.75"/><path d="M619.9 968.8Q635.6 972.7 648.1 962.4" fill="none" stroke="#8a9a3a" stroke-width="0.7" opacity="0.75"/><path d="M623.6 985.4Q639.3 989.3 651.9 979.0" fill="none" stroke="#8a9a3a" stroke-width="0.7" opacity="0.75"/><ellipse cx="635.0" cy="607.0" rx="13.5" ry="6.1" transform="rotate(-10.9 635.0 607.0)" fill="#00ffee"/><polygon points="621.7,609.6 648.3,604.4 682.8,783.0 656.2,788.1" fill="#00ffee" /><polygon points="656.1,787.6 682.6,782.4 716.3,956.4 689.7,961.6" fill="#1a72ee" /><ellipse cx="703.0" cy="959.0" rx="13.5" ry="6.1" transform="rotate(-10.9 703.0 959.0)" fill="#1a72ee"/><linearGradient id="pg27" gradientUnits="userSpaceOnUse" x1="621.7" y1="609.6" x2="648.3" y2="604.4"><stop offset="0" stop-color="#fff" stop-opacity="0.06"/><stop offset="0.4" stop-color="#000" stop-opacity="0"/><stop offset="0.78" stop-color="#000" stop-opacity="0.3"/><stop offset="1" stop-color="#000" stop-opacity="0.225"/></linearGradient><path d="M621.7 609.6L648.3 604.4L716.3 956.4A13.5 6.1 -10.9 0 1 689.7 961.6z" fill="url(#pg27)"/><path d="M625.0 626.3Q639.5 630.3 651.5 621.1" fill="none" stroke="#8a9a3a" stroke-width="0.7" opacity="0.75"/><path d="M628.2 642.9Q642.7 647.0 654.7 637.8" fill="none" stroke="#8a9a3a" stroke-width="0.7" opacity="0.75"/><path d="M631.4 659.6Q646.0 663.7 657.9 654.5" fill="none" stroke="#8a9a3a" stroke-width="0.7" opacity="0.75"/><path d="M634.6 676.3Q649.2 680.4 661.2 671.2" fill="none" stroke="#8a9a3a" stroke-width="0.7" opacity="0.75"/><path d="M637.9 693.0Q652.4 697.1 664.4 687.9" fill="none" stroke="#8a9a3a" stroke-width="0.7" opacity="0.75"/><path d="M641.1 709.7Q655.6 713.8 667.6 704.6" fill="none" stroke="#8a9a3a" stroke-width="0.7" opacity="0.75"/><path d="M644.3 726.4Q658.9 730.5 670.8 721.3" fill="none" stroke="#8a9a3a" stroke-width="0.7" opacity="0.75"/><path d="M647.5 743.1Q662.1 747.2 674.1 738.0" fill="none" stroke="#8a9a3a" stroke-width="0.7" opacity="0.75"/><path d="M650.8 759.8Q665.3 763.9 677.3 754.7" fill="none" stroke="#8a9a3a" stroke-width="0.7" opacity="0.75"/><path d="M654.0 776.5Q668.5 780.5 680.5 771.4" fill="none" stroke="#8a9a3a" stroke-width="0.7" opacity="0.75"/><path d="M657.2 793.2Q671.7 797.2 683.7 788.0" fill="none" stroke="#8a9a3a" stroke-width="0.7" opacity="0.75"/><path d="M660.4 809.9Q675.0 813.9 686.9 804.7" fill="none" stroke="#8a9a3a" stroke-width="0.7" opacity="0.75"/><path d="M663.7 826.5Q678.2 830.6 690.2 821.4" fill="none" stroke="#8a9a3a" stroke-width="0.7" opacity="0.75"/><path d="M666.9 843.2Q681.4 847.3 693.4 838.1" fill="none" stroke="#8a9a3a" stroke-width="0.7" opacity="0.75"/><path d="M670.1 859.9Q684.6 864.0 696.6 854.8" fill="none" stroke="#8a9a3a" stroke-width="0.7" opacity="0.75"/><path d="M673.3 876.6Q687.9 880.7 699.8 871.5" fill="none" stroke="#8a9a3a" stroke-width="0.7" opacity="0.75"/><path d="M676.6 893.3Q691.1 897.4 703.1 888.2" fill="none" stroke="#8a9a3a" stroke-width="0.7" opacity="0.75"/><path d="M679.8 910.0Q694.3 914.1 706.3 904.9" fill="none" stroke="#8a9a3a" stroke-width="0.7" opacity="0.75"/><path d="M683.0 926.7Q697.5 930.8 709.5 921.6" fill="none" stroke="#8a9a3a" stroke-width="0.7" opacity="0.75"/><path d="M686.2 943.4Q700.8 947.5 712.7 938.3" fill="none" stroke="#8a9a3a" stroke-width="0.7" opacity="0.75"/><ellipse cx="703.0" cy="583.0" rx="12.5" ry="5.6" transform="rotate(-9.2 703.0 583.0)" fill="#00ffee"/><polygon points="690.7,585.0 715.3,581.0 740.1,734.6 715.4,738.6" fill="#00ffee" /><polygon points="715.3,738.0 740.0,734.0 769.3,916.0 744.7,920.0" fill="#1a72ee" /><ellipse cx="757.0" cy="918.0" rx="12.5" ry="5.6" transform="rotate(-9.2 757.0 918.0)" fill="#1a72ee"/><linearGradient id="pg28" gradientUnits="userSpaceOnUse" x1="690.7" y1="585.0" x2="715.3" y2="581.0"><stop offset="0" stop-color="#fff" stop-opacity="0.06"/><stop offset="0.4" stop-color="#000" stop-opacity="0"/><stop offset="0.78" stop-color="#000" stop-opacity="0.3"/><stop offset="1" stop-color="#000" stop-opacity="0.225"/></linearGradient><path d="M690.7 585.0L715.3 581.0L769.3 916.0A12.5 5.6 -9.2 0 1 744.7 920.0z" fill="url(#pg28)"/><path d="M693.4 601.8Q706.7 606.0 718.0 597.8" fill="none" stroke="#8a9a3a" stroke-width="0.7" opacity="0.75"/><path d="M696.1 618.6Q709.4 622.7 720.8 614.6" fill="none" stroke="#8a9a3a" stroke-width="0.7" opacity="0.75"/><path d="M698.8 635.3Q712.1 639.5 723.5 631.4" fill="none" stroke="#8a9a3a" stroke-width="0.7" opacity="0.75"/><path d="M701.5 652.1Q714.8 656.3 726.2 648.1" fill="none" stroke="#8a9a3a" stroke-width="0.7" opacity="0.75"/><path d="M704.2 668.9Q717.5 673.1 728.9 664.9" fill="none" stroke="#8a9a3a" stroke-width="0.7" opacity="0.75"/><path d="M706.9 685.7Q720.2 689.9 731.6 681.7" fill="none" stroke="#8a9a3a" stroke-width="0.7" opacity="0.75"/><path d="M709.6 702.5Q722.9 706.7 734.3 698.5" fill="none" stroke="#8a9a3a" stroke-width="0.7" opacity="0.75"/><path d="M712.3 719.3Q725.6 723.4 737.0 715.3" fill="none" stroke="#8a9a3a" stroke-width="0.7" opacity="0.75"/><path d="M715.0 736.0Q728.3 740.2 739.7 732.1" fill="none" stroke="#8a9a3a" stroke-width="0.7" opacity="0.75"/><path d="M717.7 752.8Q731.0 757.0 742.4 748.8" fill="none" stroke="#8a9a3a" stroke-width="0.7" opacity="0.75"/><path d="M720.4 769.6Q733.8 773.8 745.1 765.6" fill="none" stroke="#8a9a3a" stroke-width="0.7" opacity="0.75"/><path d="M723.1 786.4Q736.5 790.6 747.8 782.4" fill="none" stroke="#8a9a3a" stroke-width="0.7" opacity="0.75"/><path d="M725.8 803.2Q739.2 807.4 750.5 799.2" fill="none" stroke="#8a9a3a" stroke-width="0.7" opacity="0.75"/><path d="M728.5 820.0Q741.9 824.1 753.2 816.0" fill="none" stroke="#8a9a3a" stroke-width="0.7" opacity="0.75"/><path d="M731.2 836.7Q744.6 840.9 755.9 832.8" fill="none" stroke="#8a9a3a" stroke-width="0.7" opacity="0.75"/><path d="M733.9 853.5Q747.3 857.7 758.6 849.5" fill="none" stroke="#8a9a3a" stroke-width="0.7" opacity="0.75"/><path d="M736.7 870.3Q750.0 874.5 761.3 866.3" fill="none" stroke="#8a9a3a" stroke-width="0.7" opacity="0.75"/><path d="M739.4 887.1Q752.7 891.3 764.0 883.1" fill="none" stroke="#8a9a3a" stroke-width="0.7" opacity="0.75"/><path d="M742.1 903.9Q755.4 908.1 766.7 899.9" fill="none" stroke="#8a9a3a" stroke-width="0.7" opacity="0.75"/><polygon points="492.4,612.0 545.4,636.6 716.2,575.0 664.5,558.0" fill="#00fff0" /><polygon points="492.4,611.0 545.4,635.6 545.4,639.5 492.4,614.5" fill="#1a5ee8" /><polygon points="545.4,636.6 716.2,575.0 716.2,578.0 545.4,639.5" fill="#00d8d0" /><path d="M510 619L680 562M527 627L697 569M600 614L575 592M655 594L630 573M530 630L520 602" stroke="#7a9a50" stroke-width="0.6" opacity="0.8" fill="none"/><ellipse cx="525" cy="615" rx="11" ry="4" transform="rotate(-20 525 615)" fill="none" stroke="#7a9a50" stroke-width="0.6" opacity="0.8"/><ellipse cx="558" cy="630" rx="11" ry="4" transform="rotate(-20 558 630)" fill="none" stroke="#7a9a50" stroke-width="0.6" opacity="0.8"/><ellipse cx="626" cy="604" rx="11" ry="4" transform="rotate(-20 626 604)" fill="none" stroke="#7a9a50" stroke-width="0.6" opacity="0.8"/><ellipse cx="662" cy="590" rx="11" ry="4" transform="rotate(-20 662 590)" fill="none" stroke="#7a9a50" stroke-width="0.6" opacity="0.8"/><ellipse cx="694" cy="579" rx="11" ry="4" transform="rotate(-20 694 579)" fill="none" stroke="#7a9a50" stroke-width="0.6" opacity="0.8"/><ellipse cx="600" cy="575" rx="11" ry="4" transform="rotate(-20 600 575)" fill="none" stroke="#7a9a50" stroke-width="0.6" opacity="0.8"/><clipPath id="colc"><path d="M573.7 400L633.6 398L637.4 574Q634 590 606 593Q583 594 579.3 586z"/></clipPath><g clip-path="url(#colc)"><polygon points="560.0,390.0 650.0,390.0 650.0,429.0 560.0,439.0" fill="#ccff00" /><polygon points="560.0,439.0 650.0,429.0 650.0,483.0 560.0,492.0" fill="#66ff00" /><polygon points="560.0,492.0 650.0,483.0 650.0,534.0 560.0,545.0" fill="#00ff00" /><polygon points="560.0,545.0 650.0,534.0 650.0,610.0 560.0,610.0" fill="#00ffaa" /><linearGradient id="colg" gradientUnits="userSpaceOnUse" x1="575" y1="0" x2="636" y2="0"><stop offset="0" stop-color="#fff" stop-opacity="0.05"/><stop offset="0.45" stop-color="#000" stop-opacity="0"/><stop offset="0.56" stop-color="#000" stop-opacity="0.12"/><stop offset="0.7" stop-color="#000" stop-opacity="0.3"/><stop offset="1" stop-color="#000" stop-opacity="0.38"/></linearGradient><rect x="560" y="390" width="90" height="220" fill="url(#colg)"/></g><polygon points="560.0,322.6 600.0,325.5 655.0,328.5 705.0,341.0 660.0,338.0 610.0,334.0" fill="#22ff00" stroke="#22ff00" stroke-width="0.6"/><polygon points="655.0,328.5 685.0,330.1 735.0,341.6 705.0,341.0" fill="#88ff00" stroke="#88ff00" stroke-width="0.6"/><polygon points="685.0,330.1 695.0,330.6 720.0,332.4 770.0,343.1 752.0,342.0 735.0,341.6" fill="#ddff00" stroke="#ddff00" stroke-width="0.6"/><polygon points="720.0,332.4 736.0,333.6 750.0,333.0 800.0,345.0 770.0,343.1" fill="#ffcc00" stroke="#ffcc00" stroke-width="0.6"/><polygon points="750.0,333.0 765.0,332.4 815.0,346.3 800.0,345.0" fill="#ff7700" stroke="#ff7700" stroke-width="0.6"/><polygon points="765.0,332.4 774.0,332.0 820.0,325.5 869.0,312.0 967.0,326.2 920.0,341.8 847.7,349.0 815.0,346.3" fill="#ff0000" stroke="#ff0000" stroke-width="0.6"/><polygon points="869.0,312.0 903.0,301.0 1001.0,314.0 967.5,326.0 967.0,326.2" fill="#ff9900" stroke="#ff9900" stroke-width="0.6"/><polygon points="903.0,301.0 920.0,294.0 971.0,278.0 977.0,276.5 1075.0,288.0 1058.0,294.0 1001.0,314.0" fill="#ffff00" stroke="#ffff00" stroke-width="0.6"/><polygon points="977.0,276.5 1035.0,261.9 1133.0,268.0 1109.0,276.0 1075.0,288.0" fill="#d4f400" stroke="#d4f400" stroke-width="0.6"/><polygon points="607.0,337.0 705.0,341.0 705.0,345.0 607.0,347.0" fill="#119900" /><polygon points="607.0,333.5 610.0,333.5 630.0,335.1 630.0,379.6 607.0,379.9" fill="#009e00" stroke="#009e00" stroke-width="0.6"/><polygon points="630.0,335.1 660.0,337.5 678.0,338.7 678.0,379.0 630.0,379.6" fill="#149c00" stroke="#149c00" stroke-width="0.6"/><polygon points="678.0,338.7 705.0,340.5 741.0,341.3 741.0,380.9 680.0,379.0 678.0,379.0" fill="#6a9a00" stroke="#6a9a00" stroke-width="0.6"/><polygon points="741.0,341.3 752.0,341.5 767.0,342.4 767.0,381.8 741.0,380.9" fill="#8c9a00" stroke="#8c9a00" stroke-width="0.6"/><polygon points="767.0,342.4 793.0,344.1 793.0,381.7 774.0,382.0 767.0,381.8" fill="#9c9000" stroke="#9c9000" stroke-width="0.6"/><polygon points="793.0,344.1 800.0,344.5 821.0,346.3 821.0,381.4 793.0,381.7" fill="#a25a00" stroke="#a25a00" stroke-width="0.6"/><polygon points="821.0,346.3 847.7,348.5 848.0,348.5 848.0,380.9 847.0,381.0 821.0,381.4" fill="#a03400" stroke="#a03400" stroke-width="0.6"/><polygon points="848.0,348.5 920.0,341.3 939.0,335.0 939.0,373.0 919.0,376.6 848.0,380.9" fill="#9c0000" stroke="#9c0000" stroke-width="0.6"/><polygon points="939.0,335.0 955.0,329.7 955.0,370.1 939.0,373.0" fill="#a03a00" stroke="#a03a00" stroke-width="0.6"/><polygon points="955.0,329.7 967.5,325.5 972.0,323.9 972.0,367.0 955.0,370.1" fill="#a25800" stroke="#a25800" stroke-width="0.6"/><polygon points="972.0,323.9 1001.0,313.5 1001.0,361.8 1000.0,362.0 972.0,367.0" fill="#a08800" stroke="#a08800" stroke-width="0.6"/><polygon points="1001.0,313.5 1032.0,302.6 1032.0,354.8 1001.0,361.8" fill="#9a9c00" stroke="#9a9c00" stroke-width="0.6"/><polygon points="1032.0,302.6 1058.0,293.5 1106.0,276.6 1106.0,333.0 1105.0,333.0 1058.0,349.0 1032.0,354.8" fill="#74a000" stroke="#74a000" stroke-width="0.6"/><polygon points="1105.0,277.0 1109.0,276.0 1133.0,268.0 1132.0,272.0 1110.0,279.0 1106.0,293.0" fill="#80a800" /><polygon points="1099.0,280.0 1107.0,277.0 1106.0,333.0 1099.0,335.0" fill="#74a000" /><polygon points="523.0,320.0 610.0,327.0 614.0,333.0 607.0,347.0 607.0,378.0 564.0,372.0 549.0,338.0 537.0,328.0 524.0,325.0" fill="#00ff00" /><polygon points="570.0,342.0 584.0,346.0 588.0,361.0 574.0,358.0" fill="#009a00" /><polygon points="573.0,345.0 584.0,348.0 586.0,358.0 576.0,356.0" fill="#00b800" /><path d="M869 312L967.5 328.6M903 301L1001 319.8M940 287L1040 311M985 274L1080 292M800 330L900 344M740 333L840 349M1010 268L1108 279" stroke="#b08a20" stroke-width="0.5" opacity="0.5" fill="none"/><path d="M760 337Q900 320 1000 292Q1040 280 1120 270M790 340Q930 325 1020 300Q1060 288 1125 274" stroke="#b08a20" stroke-width="0.5" opacity="0.45" fill="none"/><polygon points="542.7,376.4 591.4,386.5 589.9,424.5 560.9,418.0" fill="#ffff00" /><polygon points="552.0,400.0 590.6,408.0 589.9,424.5 560.9,418.0" fill="#ccff00" /><polygon points="591.4,386.5 669.5,371.2 647.0,412.4 589.9,424.5" fill="#7e9e00" /><polygon points="590.8,405.0 658.0,391.5 647.0,412.4 589.9,424.5" fill="#72a000" /><polygon points="542.7,376.4 564.6,372.7 669.5,371.2 591.4,386.5" fill="#d8ee00" /></g></svg>
<div class="a" style="left:852.5px;top:171px;width:444.5px;height:16.5px;background:#434850;border-radius:3px;box-shadow:0 0 1px #888"></div>
<svg class="a" style="left:856px;top:173px" width="50" height="13"><path d="M3 7l3-3.5 3 3.5M6 4q5 -1 7 5" fill="none" stroke="#6e737a" stroke-width="1.1"/><path d="M27 9q2 -6 7 -5M31 3l3 1-2 3" fill="none" stroke="#6e737a" stroke-width="1.1"/><path d="M37 5h6v3h-6zM38 8v3M42 8v3M37 11h6" fill="none" stroke="#c5c9ce" stroke-width="0.9"/><circle cx="44" cy="3" r="1.6" fill="#5ea3ea"/></svg>
<div class="a" style="left:911px;top:171.5px;width:101px;height:15.5px;border:1px solid #9a9ea4;border-radius:3px;background:#434850"></div>
<div class="t" style="left:913px;top:174px;font-size:9.5px;line-height:11px;color:#e6e8ea">Stage2</div>
<div class="chev" style="left:1002px;top:175.5px;border-color:#eee;width:5px;height:5px;border-width:1.5px"></div>
<svg class="a" style="left:1017px;top:172px" width="34" height="14"><path d="M3 3h8M3 11h8M4 3l3 4 3-4M4 11l3-4 3 4" fill="none" stroke="#c5c9ce" stroke-width="0.9"/><path d="M7 1v4" stroke="#5ea3ea" stroke-width="1.2"/><circle cx="21" cy="4" r="1.8" fill="#5ea3ea"/><path d="M23 5l6 3-3 1 2 3" fill="none" stroke="#c5c9ce" stroke-width="0.9"/></svg>
<div class="a" style="left:1055px;top:171.5px;width:79.5px;height:15.5px;border:1px solid #9a9ea4;border-radius:3px;background:#434850"></div>
<div class="chev" style="left:1124px;top:175.5px;border-color:#eee;width:5px;height:5px;border-width:1.5px"></div>
<svg class="a" style="left:1141px;top:172px" width="14" height="14"><circle cx="3.5" cy="3.5" r="1.8" fill="#5ea3ea"/><path d="M6 5l6 3-3 1 2 3M7 3h5" fill="none" stroke="#c5c9ce" stroke-width="0.9"/></svg>
<div class="a" style="left:1160.6px;top:171.5px;width:79px;height:15.5px;border:1px solid #9a9ea4;border-radius:3px;background:#434850"></div>
<div class="chev" style="left:1229px;top:175.5px;border-color:#eee;width:5px;height:5px;border-width:1.5px"></div>
<svg class="a" style="left:1245px;top:172px" width="32" height="14"><circle cx="7" cy="7" r="4.5" fill="none" stroke="#6e737a" stroke-width="0.9"/><path d="M3 11l-1.5 2" stroke="#6e737a"/><path d="M20 7v-2a4 4 0 0 1 6 0v2" fill="none" stroke="#c5c9ce" stroke-width="1"/><rect x="19" y="7" width="8" height="6" rx="1" fill="none" stroke="#c5c9ce" stroke-width="1"/><path d="M23 8v4" stroke="#c5c9ce"/></svg>
<div class="a" style="left:1280px;top:171px;width:17px;height:16.5px;background:#1a6ee8;border-radius:0 3px 3px 0"></div>
<svg class="a" style="left:1282px;top:172px" width="14" height="14"><path d="M3.5 6v-2a3.5 3.5 0 0 1 7 0" fill="none" stroke="#e8f0ff" stroke-width="1"/><rect x="3" y="6" width="8" height="6.5" rx="1" fill="none" stroke="#e8f0ff" stroke-width="1"/><path d="M7 7v4.5" stroke="#e8f0ff"/></svg>
<svg class="a" style="left:1740px;top:195px" width="100" height="70"><path d="M61.2 28.5v35M61.2 63.4L30 58M61.2 63.4L78 53.8" stroke="#a9adb2" stroke-width="1" fill="none"/><path d="M57.2 11h9.6L57.2 23h9.6" fill="none" stroke="#62666b" stroke-width="1.7"/><path d="M14.5 50.5l5 6.5 5-6.5M19.5 57v6.5" fill="none" stroke="#62666b" stroke-width="1.6"/><path d="M79.5 44l10.5 13M90 44L79.5 57" fill="none" stroke="#62666b" stroke-width="1.6"/></svg>
<div class="a" style="left:1835.5px;top:342.5px;width:28px;height:28px;background:#e6e8ec;border-radius:50%"></div>
<svg class="a" style="left:1841.5px;top:348.5px" width="17" height="17"><path d="M8 1.2l6.5 3.6v7.4L8 15.8 1.5 12.2V4.8z M1.5 4.8L8 8.4l6.5-3.6M8 8.4v7.4" fill="none" stroke="#5b5f65" stroke-width="1.2" stroke-linejoin="round"/></svg>
<div class="a" style="left:1850.5px;top:498.5px;width:27px;height:211px;background:#4a4f57;border-radius:3px"></div>
<svg class="a" style="left:1853px;top:501px" width="24" height="13"><path d="M3.5 4.8v3l-2-1.5z" fill="#c8ccd1"/><g transform="translate(9.5 0.5)"><rect x="1.5" y="1.5" width="9" height="9" fill="none" stroke="#c8ccd1" stroke-width="0.9"/><path d="M3.5 6h5M6.5 4l2 2-2 2" fill="none" stroke="#c8ccd1" stroke-width="0.8"/></g></svg>
<svg class="a" style="left:1853px;top:517px" width="24" height="13"><path d="M3.5 4.8v3l-2-1.5z" fill="#c8ccd1"/><g transform="translate(9.5 0.5)"><path d="M2 2l8 3.5-3.5 1L5 10z" fill="none" stroke="#c8ccd1" stroke-width="0.9"/><path d="M1 9.5h3" stroke="#c8ccd1" stroke-width="0.8"/></g></svg>
<svg class="a" style="left:1853px;top:533px" width="24" height="13"><path d="M3.5 4.8v3l-2-1.5z" fill="#c8ccd1"/><g transform="translate(9.5 0.5)"><path d="M3.5 10.5L2 6.5V4.5h1.3v2M3.3 6V2.3h1.4V6M4.7 5.5V1.5h1.4v4M6.1 5.5V2.2h1.4v4.3l1.2-1.5 1 .7-2.2 4.8H3.5" fill="none" stroke="#c8ccd1" stroke-width="0.8"/></g></svg>
<svg class="a" style="left:1853px;top:550px" width="24" height="13"><path d="M3.5 4.8v3l-2-1.5z" fill="#c8ccd1"/><g transform="translate(9.5 0.5)"><circle cx="5" cy="5" r="3.3" fill="none" stroke="#c8ccd1" stroke-width="0.9"/><path d="M7.5 7.5l3 3" stroke="#c8ccd1" stroke-width="1.1"/><path d="M3.5 5h3M5 3.5v3" stroke="#5ea3ea" stroke-width="0.8"/></g></svg>
<svg class="a" style="left:1853px;top:566px" width="24" height="13"><path d="M3.5 4.8v3l-2-1.5z" fill="#c8ccd1"/><g transform="translate(9.5 0.5)"><rect x="1.5" y="1.5" width="4" height="4" fill="none" stroke="#c8ccd1" stroke-width="0.8"/><rect x="6.5" y="1.5" width="4" height="4" fill="none" stroke="#c8ccd1" stroke-width="0.8"/><rect x="1.5" y="6.5" width="4" height="4" fill="none" stroke="#c8ccd1" stroke-width="0.8"/><path d="M7 7l3.5 1.5-1.5.5-.5 1.5z" fill="#5ea3ea"/></g></svg>
<svg class="a" style="left:1853px;top:582.5px" width="24" height="13"><path d="M3.5 4.8v3l-2-1.5z" fill="#c8ccd1"/><g transform="translate(9.5 0.5)"><circle cx="3" cy="3" r="1.8" fill="#5ea3ea"/><path d="M4.5 4.5l6 2.5-2.5 1 -1 2.5z" fill="none" stroke="#c8ccd1" stroke-width="0.9"/></g></svg>
<svg class="a" style="left:1853px;top:599px" width="24" height="13"><path d="M3.5 4.8v3l-2-1.5z" fill="#c8ccd1"/><g transform="translate(9.5 0.5)"><rect x="1.5" y="1.5" width="8" height="8" fill="none" stroke="#c8ccd1" stroke-width="0.8" stroke-dasharray="1.5 1"/><path d="M5 5l5.5 2.2-2.2.8-.8 2.2z" fill="none" stroke="#5ea3ea" stroke-width="0.8"/></g></svg>
<svg class="a" style="left:1853px;top:615px" width="24" height="13"><path d="M3.5 4.8v3l-2-1.5z" fill="#c8ccd1"/><g transform="translate(9.5 0.5)"><rect x="1.5" y="1.5" width="4" height="4" fill="none" stroke="#c8ccd1" stroke-width="0.8"/><rect x="6.5" y="1.5" width="4" height="4" fill="#5ea3ea" stroke="#c8ccd1" stroke-width="0.8"/><rect x="1.5" y="6.5" width="4" height="4" fill="none" stroke="#c8ccd1" stroke-width="0.8"/><rect x="6.5" y="6.5" width="4" height="4" fill="none" stroke="#c8ccd1" stroke-width="0.8"/></g></svg>
<svg class="a" style="left:1853px;top:631.5px" width="24" height="13"><path d="M3.5 4.8v3l-2-1.5z" fill="#c8ccd1"/><g transform="translate(9.5 0.5)"><rect x="1.5" y="1.5" width="4" height="4" fill="none" stroke="#c8ccd1" stroke-width="0.8"/><rect x="6.5" y="1.5" width="4" height="4" fill="none" stroke="#c8ccd1" stroke-width="0.8"/><rect x="1.5" y="6.5" width="4" height="4" fill="none" stroke="#c8ccd1" stroke-width="0.8"/><rect x="6.5" y="6.5" width="4" height="4" fill="none" stroke="#c8ccd1" stroke-width="0.8"/></g></svg>
<svg class="a" style="left:1853px;top:648px" width="24" height="13"><path d="M3.5 4.8v3l-2-1.5z" fill="#c8ccd1"/><g transform="translate(9.5 0.5)"><rect x="1.5" y="1.5" width="9" height="7" fill="none" stroke="#c8ccd1" stroke-width="0.8"/><path d="M4 10.5h4M6 8.5v2" stroke="#c8ccd1" stroke-width="0.8"/><circle cx="6" cy="5" r="1.8" fill="#5ea3ea"/></g></svg>
<svg class="a" style="left:1853px;top:664px" width="24" height="13"><path d="M3.5 4.8v3l-2-1.5z" fill="#c8ccd1"/><g transform="translate(9.5 0.5)"><path d="M1.5 4l4-2.5 5 1v5.5l-4 2.5-5-1z" fill="none" stroke="#c8ccd1" stroke-width="0.8"/><path d="M6.5 4.5v5.5M6.5 4.5l4-2" stroke="#5ea3ea" stroke-width="0.9"/></g></svg>
<svg class="a" style="left:1853px;top:680px" width="24" height="13"><path d="M3.5 4.8v3l-2-1.5z" fill="#c8ccd1"/><g transform="translate(9.5 0.5)"><path d="M1.5 4l4-2.5 5 1v5.5l-4 2.5-5-1z M1.5 4l5 1 4-2.5M6.5 5v5.5" fill="none" stroke="#c8ccd1" stroke-width="0.8"/></g></svg>
<svg class="a" style="left:1853px;top:696.5px" width="24" height="13"><path d="M3.5 4.8v3l-2-1.5z" fill="#c8ccd1"/><g transform="translate(9.5 0.5)"><circle cx="6" cy="6" r="4.5" fill="none" stroke="#c8ccd1" stroke-width="0.8"/><path d="M3 6h6M6 3v6" stroke="#5ea3ea" stroke-width="0.8"/></g></svg>
<div class="a" style="left:786px;top:1014.3px;width:577px;height:23px;background:#2a2c30;border-radius:3px;border:1px solid #9a9da2"></div>
<div class="a" style="left:787px;top:1015px;width:7px;height:21px;background:#c9ccd0;border-radius:2px 0 0 2px"></div>
<div class="a" style="left:789.5px;top:1020px;width:1.5px;height:11px;background:#3a3c40"></div>
<div class="a" style="left:797.7px;top:1018.3px;width:52.3px;height:15.7px;border:1px solid #1a6ee8;border-radius:2px;background:#2a2c30"></div>
<div class="t" style="left:803.5px;top:1021px;font-size:8.5px;line-height:10px;color:#e8e9ea">Command</div>
<svg class="a" style="left:841px;top:1020px" width="5" height="12"><path d="M2.5 1.5l1.5 2h-3z" fill="#5ea3ea"/><path d="M2.5 9.5l1.5-2h-3z" fill="#888"/></svg>
<svg class="a" style="left:1348px;top:1022px" width="9" height="7"><path d="M4.5 1.5L8 5.5H1z" fill="#f0f0f0"/></svg>
<div class="a" style="left:36px;top:1045px;width:1848px;height:21px;background:#d5d8dc"></div>
<div class="a" style="left:36px;top:1066px;width:1848px;height:2px;background:#e9ebee"></div>
<div class="t" style="left:40px;top:1051px;font-size:8.5px;line-height:10px;color:#2b2d31">For Help, press F1</div>
<div class="a" style="left:147px;top:1049px;width:1px;height:14px;background:#c0c3c7"></div>
<div class="t" style="left:152px;top:1051px;font-size:8.5px;line-height:10px;color:#2b2d31">Node-1096</div>
<div class="a" style="left:212px;top:1049px;width:1px;height:14px;background:#c0c3c7"></div>
<svg class="a" style="left:217px;top:1050px" width="11" height="11"><rect x="0.5" y="0.5" width="10" height="10" rx="2" fill="#bfc2c6"/><path d="M3.5 2.5v4a2 2 0 0 0 4 0v-4" fill="none" stroke="#eef0f2" stroke-width="1"/></svg>
<div class="t" style="left:232px;top:1051px;font-size:8.5px;line-height:10px;color:#2b2d31">U: -67.034, 1.505, -16.609</div>
<div class="a" style="left:364px;top:1049px;width:1px;height:14px;background:#c0c3c7"></div>
<svg class="a" style="left:369px;top:1050px" width="11" height="11"><rect x="0.5" y="0.5" width="10" height="10" rx="2" fill="#bfc2c6"/><path d="M7.5 3.5a2.5 2.5 0 1 0 0 4h-1.5v-1.5" fill="none" stroke="#eef0f2" stroke-width="1"/></svg>
<div class="t" style="left:384px;top:1051px;font-size:8.5px;line-height:10px;color:#2b2d31">G: -67.034, 1.505, -16.609</div>
<div class="a" style="left:515px;top:1049px;width:1px;height:14px;background:#c0c3c7"></div>
<div class="t" style="left:521px;top:1051px;font-size:8.5px;line-height:10px;color:#2b2d31">N: 0, E: 0</div>
<div class="a" style="left:1636.7px;top:1049.4px;width:40px;height:15px;background:#e2e4e8;border-radius:4px"></div>
<div class="t" style="left:1639px;top:1051px;font-size:8.5px;line-height:10px;color:#3a3c40">tonf</div>
<div class="chev" style="left:1667px;top:1053px;border-color:#3a3c40;width:4.5px;height:4.5px"></div>
<div class="a" style="left:1680.5px;top:1049.4px;width:40px;height:15px;background:#e2e4e8;border-radius:4px"></div>
<div class="t" style="left:1682px;top:1051px;font-size:8.5px;line-height:10px;color:#3a3c40">m</div>
<div class="chev" style="left:1711px;top:1053px;border-color:#3a3c40;width:4.5px;height:4.5px"></div>
<div class="a" style="left:1724.5px;top:1050px;width:1px;height:13px;background:#c3c6ca"></div>
<div class="a" style="left:1728px;top:1049.4px;width:112px;height:15px;background:#e2e4e8;border-radius:4px"></div>
<div class="t" style="left:1731.5px;top:1052px;font-size:6.5px;line-height:8px;color:#2b2d31;font-weight:bold;letter-spacing:-1.2px">AA</div>
<div class="a" style="left:1746px;top:1056px;width:76px;height:1.2px;background:#d2d4d8"></div>
<div class="a" style="left:1769.3px;top:1050.8px;width:4px;height:12px;background:#6c6f74;border-radius:1px"></div>
<div class="t" style="left:1828px;top:1051.5px;font-size:7.5px;line-height:9px;color:#2b2d31;font-weight:bold;letter-spacing:-1.3px">AA</div>
<div class="a" style="left:1844.5px;top:1049.4px;width:40px;height:15px;background:#e2e4e8;border-radius:4px 0 0 4px"></div>
<div class="t" style="left:1846px;top:1051px;font-size:8.5px;line-height:10px;color:#3a3c40">100%</div>
<div class="chev" style="left:1876px;top:1053px;border-color:#3a3c40;width:4.5px;height:4.5px"></div>
</body></html>
